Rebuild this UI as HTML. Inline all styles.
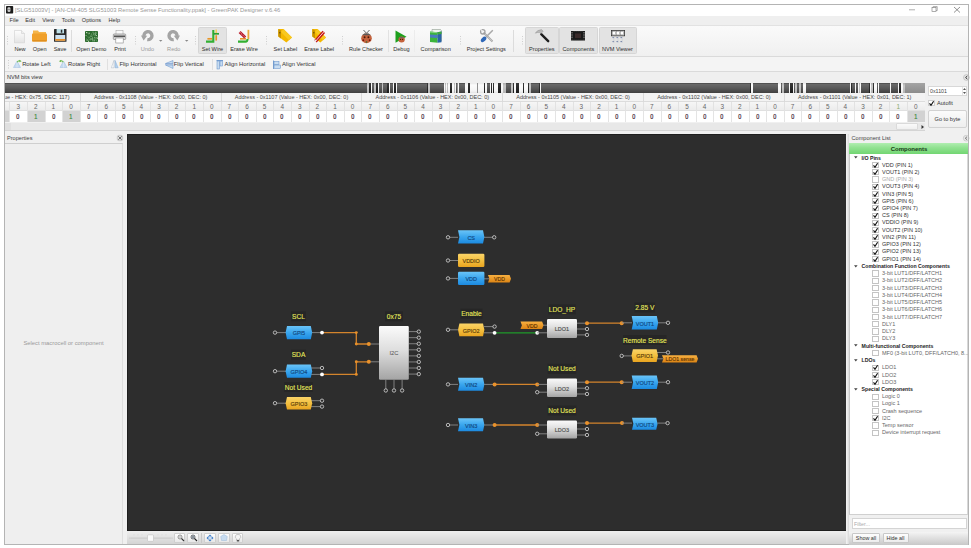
<!DOCTYPE html><html><head><meta charset="utf-8"><style>
html,body{margin:0;padding:0;background:#fff;width:971px;height:548px;overflow:hidden;font-family:"Liberation Sans", sans-serif;}
div{box-sizing:border-box;}
</style></head><body>
<div style="position:absolute;left:4px;top:4px;width:965px;height:541px;border:1px solid #b4b4b4;background:#f0f0f0;"></div>
<div style="position:absolute;left:5px;top:5px;width:963px;height:10.5px;background:#fff;"></div>
<div style="position:absolute;left:15px;top:4.8999999999999995px;height:11.6px;line-height:11.6px;font-size:5.8px;color:#999;white-space:nowrap;">[SLG51003V] - [AN-CM-405 SLG51003 Remote Sense Functionality.ppak] - GreenPAK Designer v.6.46</div>
<svg style="position:absolute;left:900px;top:5px" width="68" height="10"><line x1="9" y1="4.8" x2="15" y2="4.8" stroke="#777" stroke-width="0.6"/><rect x="32" y="2.6" width="4" height="4" fill="none" stroke="#777" stroke-width="0.6"/><path d="M33.2 2.6V1.6H37.2V5.6H36" fill="none" stroke="#777" stroke-width="0.6"/><path d="M54 2 L60 7.5 M60 2 L54 7.5" stroke="#666" stroke-width="0.7"/></svg>
<div style="position:absolute;left:5px;top:15.5px;width:963px;height:9.5px;background:#efefef;"></div>
<div style="position:absolute;left:9.5px;top:14.9px;height:11.2px;line-height:11.2px;font-size:5.6px;color:#333;white-space:nowrap;">File</div>
<div style="position:absolute;left:25.3px;top:14.9px;height:11.2px;line-height:11.2px;font-size:5.6px;color:#333;white-space:nowrap;">Edit</div>
<div style="position:absolute;left:42.2px;top:14.9px;height:11.2px;line-height:11.2px;font-size:5.6px;color:#333;white-space:nowrap;">View</div>
<div style="position:absolute;left:61.8px;top:14.9px;height:11.2px;line-height:11.2px;font-size:5.6px;color:#333;white-space:nowrap;">Tools</div>
<div style="position:absolute;left:81.8px;top:14.9px;height:11.2px;line-height:11.2px;font-size:5.6px;color:#333;white-space:nowrap;">Options</div>
<div style="position:absolute;left:108.5px;top:14.9px;height:11.2px;line-height:11.2px;font-size:5.6px;color:#333;white-space:nowrap;">Help</div>
<div style="position:absolute;left:5px;top:25px;width:963px;height:31.5px;background:linear-gradient(#fafafa,#f0f0f0);border-top:1px solid #e2e2e2;border-bottom:1px solid #dadada;"></div>
<div style="position:absolute;left:5px;top:56.5px;width:963px;height:15px;background:#f4f4f4;border-bottom:1px solid #dadada;"></div>
<div style="position:absolute;left:5px;top:71.5px;width:963px;height:11px;background:#efefef;"></div>
<div style="position:absolute;left:7px;top:72.0px;height:11.2px;line-height:11.2px;font-size:5.6px;color:#333;white-space:nowrap;">NVM bits view</div>
<svg style="position:absolute;left:5.9px;top:5.9px;overflow:visible" width="7.2" height="7.6" viewBox="0 0 7.2 7.6"><rect x="0" y="0" width="7.2" height="7.6" rx="0.8" fill="#1c1c1c"/><rect x="1.5" y="1.3" width="3" height="4.6" rx="1.2" fill="#c8c8c8"/><rect x="1.5" y="3.4" width="3" height="0.5" fill="#555"/></svg>
<svg style="position:absolute;left:7px;top:36px;overflow:visible" width="1" height="10" viewBox="0 0 1 10"><rect x="0" y="0" width="1" height="1" fill="#cfcfcf"/><rect x="0" y="2.5" width="1" height="1" fill="#cfcfcf"/><rect x="0" y="5.0" width="1" height="1" fill="#cfcfcf"/><rect x="0" y="7.5" width="1" height="1" fill="#cfcfcf"/></svg>
<div style="position:absolute;left:198.3px;top:27.3px;width:28.799999999999983px;height:26.8px;background:#e3e3e3;border:1px solid #d6d6d6;border-radius:1.5px;"></div>
<div style="position:absolute;left:525.2px;top:27.3px;width:33.69999999999993px;height:26.8px;background:#e3e3e3;border:1px solid #d6d6d6;border-radius:1.5px;"></div>
<div style="position:absolute;left:559.4px;top:27.3px;width:38.39999999999998px;height:26.8px;background:#e3e3e3;border:1px solid #d6d6d6;border-radius:1.5px;"></div>
<div style="position:absolute;left:598.6px;top:27.3px;width:38.19999999999993px;height:26.8px;background:#e3e3e3;border:1px solid #d6d6d6;border-radius:1.5px;"></div>
<div style="position:absolute;left:-10.0px;top:43.8px;width:60px;height:11.2px;line-height:11.2px;text-align:center;font-size:5.6px;color:#2e2e2e;white-space:nowrap;">New</div>
<div style="position:absolute;left:9.700000000000003px;top:43.8px;width:60px;height:11.2px;line-height:11.2px;text-align:center;font-size:5.6px;color:#2e2e2e;white-space:nowrap;">Open</div>
<div style="position:absolute;left:30.0px;top:43.8px;width:60px;height:11.2px;line-height:11.2px;text-align:center;font-size:5.6px;color:#2e2e2e;white-space:nowrap;">Save</div>
<div style="position:absolute;left:61.400000000000006px;top:43.8px;width:60px;height:11.2px;line-height:11.2px;text-align:center;font-size:5.6px;color:#2e2e2e;white-space:nowrap;">Open Demo</div>
<div style="position:absolute;left:90.0px;top:43.8px;width:60px;height:11.2px;line-height:11.2px;text-align:center;font-size:5.6px;color:#2e2e2e;white-space:nowrap;">Print</div>
<div style="position:absolute;left:117.4px;top:43.8px;width:60px;height:11.2px;line-height:11.2px;text-align:center;font-size:5.6px;color:#9a9a9a;white-space:nowrap;">Undo</div>
<div style="position:absolute;left:143.8px;top:43.8px;width:60px;height:11.2px;line-height:11.2px;text-align:center;font-size:5.6px;color:#9a9a9a;white-space:nowrap;">Redo</div>
<div style="position:absolute;left:182.4px;top:43.8px;width:60px;height:11.2px;line-height:11.2px;text-align:center;font-size:5.6px;color:#2e2e2e;white-space:nowrap;">Set Wire</div>
<div style="position:absolute;left:214.0px;top:43.8px;width:60px;height:11.2px;line-height:11.2px;text-align:center;font-size:5.6px;color:#2e2e2e;white-space:nowrap;">Erase Wire</div>
<div style="position:absolute;left:255.39999999999998px;top:43.8px;width:60px;height:11.2px;line-height:11.2px;text-align:center;font-size:5.6px;color:#2e2e2e;white-space:nowrap;">Set Label</div>
<div style="position:absolute;left:289.2px;top:43.8px;width:60px;height:11.2px;line-height:11.2px;text-align:center;font-size:5.6px;color:#2e2e2e;white-space:nowrap;">Erase Label</div>
<div style="position:absolute;left:336.0px;top:43.8px;width:60px;height:11.2px;line-height:11.2px;text-align:center;font-size:5.6px;color:#2e2e2e;white-space:nowrap;">Rule Checker</div>
<div style="position:absolute;left:371.4px;top:43.8px;width:60px;height:11.2px;line-height:11.2px;text-align:center;font-size:5.6px;color:#2e2e2e;white-space:nowrap;">Debug</div>
<div style="position:absolute;left:405.7px;top:43.8px;width:60px;height:11.2px;line-height:11.2px;text-align:center;font-size:5.6px;color:#2e2e2e;white-space:nowrap;">Comparison</div>
<div style="position:absolute;left:456.3px;top:43.8px;width:60px;height:11.2px;line-height:11.2px;text-align:center;font-size:5.6px;color:#2e2e2e;white-space:nowrap;">Project Settings</div>
<div style="position:absolute;left:511.79999999999995px;top:43.8px;width:60px;height:11.2px;line-height:11.2px;text-align:center;font-size:5.6px;color:#2e2e2e;white-space:nowrap;">Properties</div>
<div style="position:absolute;left:548.4px;top:43.8px;width:60px;height:11.2px;line-height:11.2px;text-align:center;font-size:5.6px;color:#2e2e2e;white-space:nowrap;">Components</div>
<div style="position:absolute;left:587.4px;top:43.8px;width:60px;height:11.2px;line-height:11.2px;text-align:center;font-size:5.6px;color:#2e2e2e;white-space:nowrap;">NVM Viewer</div>
<div style="position:absolute;left:71.2px;top:30px;width:1px;height:22px;background:#dcdcdc;"></div>
<svg style="position:absolute;left:134.5px;top:36px;overflow:visible" width="1" height="10" viewBox="0 0 1 10"><rect x="0" y="0" width="1" height="1" fill="#cfcfcf"/><rect x="0" y="2.5" width="1" height="1" fill="#cfcfcf"/><rect x="0" y="5.0" width="1" height="1" fill="#cfcfcf"/><rect x="0" y="7.5" width="1" height="1" fill="#cfcfcf"/></svg>
<svg style="position:absolute;left:194.5px;top:36px;overflow:visible" width="1" height="10" viewBox="0 0 1 10"><rect x="0" y="0" width="1" height="1" fill="#cfcfcf"/><rect x="0" y="2.5" width="1" height="1" fill="#cfcfcf"/><rect x="0" y="5.0" width="1" height="1" fill="#cfcfcf"/><rect x="0" y="7.5" width="1" height="1" fill="#cfcfcf"/></svg>
<svg style="position:absolute;left:266px;top:36px;overflow:visible" width="1" height="10" viewBox="0 0 1 10"><rect x="0" y="0" width="1" height="1" fill="#cfcfcf"/><rect x="0" y="2.5" width="1" height="1" fill="#cfcfcf"/><rect x="0" y="5.0" width="1" height="1" fill="#cfcfcf"/><rect x="0" y="7.5" width="1" height="1" fill="#cfcfcf"/></svg>
<svg style="position:absolute;left:341.8px;top:36px;overflow:visible" width="1" height="10" viewBox="0 0 1 10"><rect x="0" y="0" width="1" height="1" fill="#cfcfcf"/><rect x="0" y="2.5" width="1" height="1" fill="#cfcfcf"/><rect x="0" y="5.0" width="1" height="1" fill="#cfcfcf"/><rect x="0" y="7.5" width="1" height="1" fill="#cfcfcf"/></svg>
<div style="position:absolute;left:388.3px;top:30px;width:1px;height:22px;background:#e2e2e2;"></div>
<div style="position:absolute;left:413.8px;top:30px;width:1px;height:22px;background:#ececec;"></div>
<svg style="position:absolute;left:459.6px;top:36px;overflow:visible" width="1" height="10" viewBox="0 0 1 10"><rect x="0" y="0" width="1" height="1" fill="#cfcfcf"/><rect x="0" y="2.5" width="1" height="1" fill="#cfcfcf"/><rect x="0" y="5.0" width="1" height="1" fill="#cfcfcf"/><rect x="0" y="7.5" width="1" height="1" fill="#cfcfcf"/></svg>
<div style="position:absolute;left:512.6px;top:30px;width:1px;height:22px;background:#dcdcdc;"></div>
<svg style="position:absolute;left:522.4px;top:36px;overflow:visible" width="1" height="10" viewBox="0 0 1 10"><rect x="0" y="0" width="1" height="1" fill="#cfcfcf"/><rect x="0" y="2.5" width="1" height="1" fill="#cfcfcf"/><rect x="0" y="5.0" width="1" height="1" fill="#cfcfcf"/><rect x="0" y="7.5" width="1" height="1" fill="#cfcfcf"/></svg>
<svg style="position:absolute;left:14.4px;top:29.7px;overflow:visible" width="11" height="13.3" viewBox="0 0 11 13.3"><defs><linearGradient id="gNew" x1="0" y1="0" x2="0" y2="1"><stop offset="0" stop-color="#fdfdfd"/><stop offset="1" stop-color="#e4e4e4"/></linearGradient></defs><path d="M0.5 0.5H7.5L10.5 3.5V12.8H0.5Z" fill="url(#gNew)" stroke="#d0d0d0" stroke-width="0.6"/><path d="M7.5 0.5V3.5H10.5" fill="#eee" stroke="#c8c8c8" stroke-width="0.5"/></svg>
<svg style="position:absolute;left:32.4px;top:30px;overflow:visible" width="15" height="11.5" viewBox="0 0 15 11.5"><path d="M1 0.5H6L7 2H14V10.5H1Z" fill="#f5b54a"/><rect x="0" y="3.5" width="15" height="8" rx="0.8" fill="#f0a02a"/><rect x="0.5" y="10" width="14" height="1.5" fill="#e09020"/></svg>
<svg style="position:absolute;left:53.5px;top:29.3px;overflow:visible" width="12.5" height="12.8" viewBox="0 0 12.5 12.8"><rect x="0" y="0" width="12.5" height="12.8" rx="0.6" fill="#2b2b2b"/><rect x="2.6" y="0" width="7.4" height="4.3" fill="#bfe0e8"/><rect x="6.8" y="0.7" width="1.5" height="3" fill="#2b2b2b"/><rect x="1.3" y="6" width="9.9" height="5.8" fill="#cfe2f0"/><rect x="1.3" y="10" width="9.9" height="1.8" fill="#e8902a"/></svg>
<svg style="position:absolute;left:85px;top:31px;overflow:visible" width="13" height="11" viewBox="0 0 13 11"><rect x="0" y="0" width="13" height="11" rx="0.8" fill="#2a6a2c"/><rect x="3.2" y="5.7" width="1.2" height="0.9" fill="#5a8a5a"/><rect x="7.2" y="6.3" width="0.7" height="0.7" fill="#c0d8b8"/><rect x="11.9" y="5.0" width="0.9" height="1.0" fill="#4a7a4a"/><rect x="2.2" y="6.5" width="0.8" height="0.5" fill="#4a7a4a"/><rect x="9.4" y="2.0" width="0.5" height="1.1" fill="#4a7a4a"/><rect x="10.0" y="3.1" width="1.1" height="1.2" fill="#4a7a4a"/><rect x="8.7" y="9.3" width="1.1" height="1.0" fill="#c0d8b8"/><rect x="11.6" y="1.8" width="0.6" height="0.6" fill="#5a8a5a"/><rect x="3.0" y="9.7" width="1.1" height="1.2" fill="#c0d8b8"/><rect x="5.3" y="8.4" width="0.8" height="1.0" fill="#4a7a4a"/><rect x="7.2" y="9.1" width="1.2" height="1.3" fill="#7aaa7a"/><rect x="8.2" y="2.0" width="1.3" height="1.2" fill="#5a8a5a"/><rect x="7.0" y="7.3" width="1.0" height="1.3" fill="#9ac49a"/><rect x="3.6" y="1.7" width="1.2" height="1.3" fill="#c0d8b8"/><rect x="1.5" y="8.1" width="1.2" height="0.5" fill="#c0d8b8"/><rect x="5.4" y="4.4" width="0.5" height="1.0" fill="#7aaa7a"/><rect x="1.0" y="7.3" width="0.9" height="1.2" fill="#5a8a5a"/><rect x="3.7" y="2.7" width="0.7" height="0.6" fill="#7aaa7a"/><rect x="7.4" y="0.8" width="1.3" height="0.7" fill="#9ac49a"/><rect x="3.5" y="7.1" width="0.8" height="1.3" fill="#5a8a5a"/><rect x="10.8" y="4.1" width="1.2" height="0.8" fill="#c0d8b8"/><rect x="10.5" y="7.0" width="1.0" height="1.3" fill="#7aaa7a"/><rect x="6.3" y="4.6" width="1.2" height="0.8" fill="#9ac49a"/><rect x="3.5" y="3.4" width="0.5" height="0.8" fill="#5a8a5a"/><rect x="7.2" y="0.7" width="1.0" height="0.6" fill="#4a7a4a"/><rect x="7.8" y="3.7" width="1.0" height="0.8" fill="#5a8a5a"/><rect x="8.6" y="7.5" width="1.0" height="1.3" fill="#7aaa7a"/><rect x="0.7" y="4.0" width="0.7" height="1.0" fill="#c0d8b8"/><rect x="2.5" y="2.3" width="1.2" height="0.7" fill="#5a8a5a"/><rect x="9.6" y="1.5" width="1.3" height="1.0" fill="#7aaa7a"/><rect x="2.0" y="5.3" width="0.7" height="0.6" fill="#5a8a5a"/><rect x="5.5" y="7.1" width="1.0" height="1.3" fill="#7aaa7a"/><rect x="8.3" y="2.6" width="0.6" height="1.1" fill="#9ac49a"/><rect x="3.0" y="5.9" width="0.7" height="0.6" fill="#5a8a5a"/><rect x="6.6" y="2.3" width="0.6" height="0.7" fill="#4a7a4a"/><rect x="9.8" y="6.6" width="0.8" height="0.6" fill="#4a7a4a"/><rect x="3.9" y="8.0" width="0.9" height="1.0" fill="#5a8a5a"/><rect x="3.8" y="5.9" width="1.2" height="0.6" fill="#7aaa7a"/><rect x="0.6" y="9.5" width="1.3" height="0.8" fill="#4a7a4a"/><rect x="11.4" y="9.3" width="0.5" height="0.9" fill="#9ac49a"/><rect x="9.2" y="7.6" width="0.9" height="1.2" fill="#5a8a5a"/><rect x="10.4" y="8.7" width="0.6" height="0.7" fill="#5a8a5a"/><rect x="0.9" y="8.1" width="1.2" height="1.2" fill="#4a7a4a"/><rect x="10.8" y="6.0" width="0.9" height="0.6" fill="#7aaa7a"/><rect x="6.3" y="2.8" width="0.9" height="0.8" fill="#7aaa7a"/><rect x="11.3" y="6.3" width="0.6" height="1.3" fill="#5a8a5a"/><rect x="6.7" y="8.2" width="0.8" height="0.7" fill="#7aaa7a"/><rect x="6.6" y="8.3" width="0.7" height="0.7" fill="#9ac49a"/><rect x="10.7" y="1.7" width="0.9" height="1.0" fill="#7aaa7a"/><rect x="5.1" y="7.7" width="0.7" height="0.9" fill="#9ac49a"/><rect x="5.4" y="5.0" width="1.2" height="1.1" fill="#7aaa7a"/><rect x="1.0" y="1.0" width="1.3" height="1.2" fill="#c0d8b8"/><rect x="1.5" y="5.3" width="0.6" height="0.6" fill="#5a8a5a"/><rect x="4.9" y="4.2" width="0.8" height="0.7" fill="#5a8a5a"/><rect x="4.3" y="1.7" width="0.5" height="1.1" fill="#4a7a4a"/><rect x="9.6" y="5.9" width="0.8" height="1.0" fill="#7aaa7a"/><rect x="9.5" y="4.1" width="1.0" height="0.8" fill="#7aaa7a"/><rect x="4.8" y="5.2" width="0.8" height="1.1" fill="#5a8a5a"/><rect x="5.8" y="2.8" width="0.7" height="1.0" fill="#4a7a4a"/><rect x="9.7" y="2.6" width="1.2" height="1.2" fill="#9ac49a"/><rect x="4.8" y="9.0" width="0.6" height="1.1" fill="#5a8a5a"/><rect x="11.3" y="7.4" width="1.1" height="1.0" fill="#4a7a4a"/><rect x="8.9" y="5.9" width="1.1" height="1.1" fill="#7aaa7a"/><rect x="5.9" y="2.7" width="0.5" height="0.6" fill="#c0d8b8"/><rect x="1.6" y="8.9" width="1.2" height="0.8" fill="#9ac49a"/><rect x="10.3" y="0.7" width="1.0" height="1.2" fill="#7aaa7a"/><rect x="11.5" y="6.0" width="0.5" height="1.1" fill="#7aaa7a"/><rect x="6.4" y="7.3" width="0.9" height="0.6" fill="#7aaa7a"/><rect x="6.9" y="5.7" width="0.6" height="0.6" fill="#4a7a4a"/><rect x="12.0" y="6.6" width="1.0" height="1.1" fill="#c0d8b8"/></svg>
<svg style="position:absolute;left:112.8px;top:29.7px;overflow:visible" width="13" height="13.3" viewBox="0 0 13 13.3"><rect x="3" y="0.5" width="7" height="4" fill="#fafafa" stroke="#9a9a9a" stroke-width="0.5"/><rect x="0.3" y="4" width="12.4" height="5.5" rx="0.8" fill="#dcdcdc" stroke="#777" stroke-width="0.6"/><rect x="1" y="5.5" width="11" height="1.6" fill="#555"/><rect x="2.8" y="8" width="7.4" height="5" fill="#fff" stroke="#888" stroke-width="0.6"/></svg>
<svg style="position:absolute;left:141px;top:30px;overflow:visible" width="13" height="12" viewBox="0 0 13 12"><path d="M6.3 9.6A4 4 0 1 0 3.2 7" fill="none" stroke="#a4a4a4" stroke-width="3.4"/><path d="M0 5.6L6.2 5.8L2.6 10.4Z" fill="#a4a4a4"/></svg>
<svg style="position:absolute;left:166.7px;top:30px;overflow:visible" width="13" height="12" viewBox="0 0 13 12"><g transform="translate(13,0) scale(-1,1)"><path d="M6.3 9.6A4 4 0 1 0 3.2 7" fill="none" stroke="#a4a4a4" stroke-width="3.4"/><path d="M0 5.6L6.2 5.8L2.6 10.4Z" fill="#a4a4a4"/></g></svg>
<svg style="position:absolute;left:158.8px;top:40.2px;overflow:visible" width="3.4" height="2" viewBox="0 0 3.4 2"><path d="M0 0H3.4L1.7 1.8Z" fill="#888"/></svg>
<svg style="position:absolute;left:184.8px;top:40.2px;overflow:visible" width="3.4" height="2" viewBox="0 0 3.4 2"><path d="M0 0H3.4L1.7 1.8Z" fill="#888"/></svg>
<svg style="position:absolute;left:206px;top:29px;overflow:visible" width="14" height="14" viewBox="0 0 14 14"><path d="M1.4 9.8H6.2" stroke="#e8962a" stroke-width="1.7"/><path d="M10.2 6.2V11.6" stroke="#e8962a" stroke-width="1.7"/><path d="M10.2 0.5V4" stroke="#f4d060" stroke-width="1.6"/><path d="M0 12.6H7.3V1" stroke="#33b033" stroke-width="2.1" fill="none"/><path d="M7.3 4.8H13" stroke="#2fa02f" stroke-width="1.7"/></svg>
<svg style="position:absolute;left:238px;top:29px;overflow:visible" width="13" height="14" viewBox="0 0 13 14"><path d="M2 9.8H8" stroke="#e8962a" stroke-width="1.6"/><path d="M10.4 0.8V10.2" stroke="#eaa83a" stroke-width="1.8"/><path d="M0 12.6H7.5Q9.5 12.6 9.5 10" stroke="#33b033" stroke-width="2.1" fill="none"/><path d="M1.6 3L7.2 8.6" stroke="#b81828" stroke-width="2.8"/><path d="M1.6 3L7.2 8.6" stroke="#f8c8c8" stroke-width="0.9" stroke-dasharray="1 1"/></svg>
<svg style="position:absolute;left:277.7px;top:29px;overflow:visible" width="14" height="14" viewBox="0 0 14 14"><path d="M0.3 0H5.5L14 8.4L8.4 13.6L0.3 7.4Z" fill="#f4b800"/><path d="M5.5 0L14 8.4L11 11.2L3 3Z" fill="#f8c820"/><path d="M0.3 0L3 1.6V9.4L0.3 7.4Z" fill="#c89200"/><circle cx="1.8" cy="3.8" r="0.8" fill="#705000"/></svg>
<svg style="position:absolute;left:311.8px;top:29px;overflow:visible" width="14" height="14" viewBox="0 0 14 14"><path d="M0.3 0H5.5L14 8.4L8.4 13.6L0.3 7.4Z" fill="#f4b800"/><path d="M5.5 0L14 8.4L11 11.2L3 3Z" fill="#f8c820"/><path d="M0.3 0L3 1.6V9.4L0.3 7.4Z" fill="#c89200"/><circle cx="1.8" cy="3.8" r="0.8" fill="#705000"/><path d="M3.4 12.4L11.8 2.8" stroke="#c41818" stroke-width="3.4"/><path d="M3.4 12.4L11.8 2.8" stroke="#ffe0e0" stroke-width="0.9"/><path d="M2.6 12.6L4 11" stroke="#e8e8f0" stroke-width="1.6"/></svg>
<svg style="position:absolute;left:360px;top:29.5px;overflow:visible" width="13" height="13.5" viewBox="0 0 13 13.5"><path d="M3.5 0L6.2 3M9.5 0L6.8 3" stroke="#444" stroke-width="0.8"/><ellipse cx="6.5" cy="8.2" rx="5.3" ry="5" fill="#c4623c"/><path d="M2 5.3Q6.5 1 11 5.3Z" fill="#5a5a5a"/><path d="M4 3.6Q6.5 2.2 9 3.6" stroke="#9a9a9a" stroke-width="0.6" fill="none"/><circle cx="4.6" cy="7.2" r="0.95" fill="#4a1808"/><circle cx="8.4" cy="7.2" r="0.95" fill="#4a1808"/><circle cx="3.3" cy="10.2" r="0.9" fill="#7a1208"/><circle cx="9.7" cy="10.2" r="0.9" fill="#7a1208"/><circle cx="6.5" cy="12" r="0.8" fill="#3a6a3a"/></svg>
<svg style="position:absolute;left:395px;top:29.8px;overflow:visible" width="12" height="13" viewBox="0 0 12 13"><path d="M0.5 0.5L11.5 6.8L0.5 12.8Z" fill="#1ea01e"/><ellipse cx="6.6" cy="9.6" rx="3.2" ry="3" fill="#c4623c"/><path d="M3.6 8.2Q6.6 5.6 9.6 8.2Z" fill="#666"/><circle cx="5.6" cy="9.4" r="0.6" fill="#4a1808"/><circle cx="7.6" cy="9.4" r="0.6" fill="#4a1808"/></svg>
<svg style="position:absolute;left:430px;top:29px;overflow:visible" width="12" height="14.2" viewBox="0 0 12 14.2"><path d="M2 0.5H10.5L11.5 1.8V12H2Z" fill="#eef4ee" stroke="#7a8a7a" stroke-width="0.5"/><path d="M0 2.5L7.5 3.2V13.8L0 13Z" fill="#3cb43c"/><path d="M0 5.5L7.5 6V9L0 8.5Z" fill="#4a7ac0"/><path d="M0 2.5L7.5 3.2V4.2L0 3.6Z" fill="#8ad48a"/><path d="M7.5 3.2L11.5 2.6V13.2L7.5 13.8Z" fill="#2a64a4"/><path d="M7.5 3.2L11.5 2.6V5L7.5 5.6Z" fill="#3ca83c"/></svg>
<svg style="position:absolute;left:479.5px;top:29.3px;overflow:visible" width="14" height="14" viewBox="0 0 14 14"><path d="M3.5 3.5L12.5 12.5" stroke="#a8a8a8" stroke-width="2"/><path d="M3.5 3.5L12.5 12.5" stroke="#d8d8d8" stroke-width="0.6"/><circle cx="2.8" cy="2.8" r="2.2" fill="none" stroke="#a0a0a0" stroke-width="1.3"/><path d="M1 0.5L3 3" stroke="#f2f2f2" stroke-width="1.2"/><path d="M12.8 1.2L6 8" stroke="#a8a8a8" stroke-width="1.5"/><ellipse cx="3.6" cy="10.4" rx="2" ry="3.3" transform="rotate(45 3.6 10.4)" fill="#3068b8"/></svg>
<svg style="position:absolute;left:534.5px;top:28.8px;overflow:visible" width="15" height="14" viewBox="0 0 15 14"><path d="M6.2 5.2L13.2 12.2" stroke="#1e1e1e" stroke-width="2.4" stroke-linecap="round"/><path d="M0.3 4.2Q2 1 6.5 0.6L8.2 2.2L5.8 4.8L4.6 3.6Q2.5 3.2 0.3 4.2Z" fill="#b8b8b8" stroke="#888" stroke-width="0.4"/></svg>
<svg style="position:absolute;left:571px;top:31px;overflow:visible" width="14" height="9.5" viewBox="0 0 14 9.5"><rect x="0" y="0" width="14" height="9.5" fill="#1a1a1a"/><rect x="4" y="2.5" width="6" height="4.5" fill="#3a2a2a"/><path d="M1 1.3V8.2M13 1.3V8.2" stroke="#e8e8e8" stroke-width="0.9" stroke-dasharray="1 1.2"/><path d="M2.6 0.5H11.4M2.6 9H11.4" stroke="#555" stroke-width="0.6" stroke-dasharray="1 1"/></svg>
<svg style="position:absolute;left:610.5px;top:29.6px;overflow:visible" width="14" height="13" viewBox="0 0 14 13"><rect x="0.4" y="0.4" width="13.2" height="5.4" fill="#f4f4f4" stroke="#333" stroke-width="0.8"/><rect x="1.3" y="1.3" width="3" height="3.6" fill="#fff" stroke="#666" stroke-width="0.4"/><rect x="5.5" y="1.3" width="3" height="3.6" fill="#fff" stroke="#666" stroke-width="0.4"/><rect x="9.7" y="1.3" width="3" height="3.6" fill="#fff" stroke="#666" stroke-width="0.4"/><path d="M1.5 7.6H13M1.5 11.6H13" stroke="#6a7aa0" stroke-width="1" stroke-dasharray="1.6 2.4"/><path d="M2.8 6V13M7 6V13M11.2 6V13" stroke="#b8c0d0" stroke-width="0.4"/></svg>
<svg style="position:absolute;left:7.5px;top:59.5px;overflow:visible" width="1" height="9.5" viewBox="0 0 1 9.5"><rect x="0" y="0.0" width="1" height="1" fill="#cfcfcf"/><rect x="0" y="2.5" width="1" height="1" fill="#cfcfcf"/><rect x="0" y="5.0" width="1" height="1" fill="#cfcfcf"/><rect x="0" y="7.5" width="1" height="1" fill="#cfcfcf"/></svg>
<svg style="position:absolute;left:12.8px;top:60.3px;overflow:visible" width="9" height="8" viewBox="0 0 9 8"><path d="M0.5 7.5L4 1L7.5 7.5Z" fill="#c4daf0" stroke="#8ab0d8" stroke-width="0.4"/><path d="M4 1V7.5" stroke="#e8f2fc" stroke-width="0.5"/><path d="M4.2 2.2Q5 0.3 7.2 0.8" stroke="#6ab84a" stroke-width="1.1" fill="none"/><path d="M6.4 -0.3L8.6 1.2L6.3 2.2Z" fill="#6ab84a"/></svg>
<div style="position:absolute;left:22.2px;top:59.2px;height:11.6px;line-height:11.6px;font-size:5.8px;color:#333;white-space:nowrap;">Rotate Left</div>
<svg style="position:absolute;left:58.5px;top:60.3px;overflow:visible" width="9" height="8" viewBox="0 0 9 8"><g transform="translate(8.5,0) scale(-1,1)"><path d="M0.5 7.5L4 1L7.5 7.5Z" fill="#c4daf0" stroke="#8ab0d8" stroke-width="0.4"/><path d="M4 1V7.5" stroke="#e8f2fc" stroke-width="0.5"/><path d="M4.2 2.2Q5 0.3 7.2 0.8" stroke="#6ab84a" stroke-width="1.1" fill="none"/><path d="M6.4 -0.3L8.6 1.2L6.3 2.2Z" fill="#6ab84a"/></g></svg>
<div style="position:absolute;left:68px;top:59.2px;height:11.6px;line-height:11.6px;font-size:5.8px;color:#333;white-space:nowrap;">Rotate Right</div>
<div style="position:absolute;left:107.2px;top:59px;width:1px;height:10.5px;background:#e0e0e0;"></div>
<svg style="position:absolute;left:111.2px;top:60px;overflow:visible" width="7.5" height="8" viewBox="0 0 7.5 8"><path d="M3 0.3L0.3 7.8H3Z" fill="#fafafa" stroke="#9aaabb" stroke-width="0.4"/><path d="M4 0.3L7.2 7.8H4Z" fill="#b4d0ec" stroke="#7aa4d0" stroke-width="0.4"/></svg>
<div style="position:absolute;left:119.5px;top:59.2px;height:11.6px;line-height:11.6px;font-size:5.8px;color:#333;white-space:nowrap;">Flip Horizontal</div>
<svg style="position:absolute;left:164.5px;top:60px;overflow:visible" width="8.5" height="9" viewBox="0 0 8.5 9"><path d="M0.5 3.5L8 0.5V3.5ZM0.5 5L8 8.5V5Z" fill="#c8dcf0" stroke="#5a8ac8" stroke-width="0.5"/><path d="M0 4.2H8.5" stroke="#5a8ac8" stroke-width="0.5"/></svg>
<div style="position:absolute;left:173.8px;top:59.2px;height:11.6px;line-height:11.6px;font-size:5.8px;color:#333;white-space:nowrap;">Flip Vertical</div>
<div style="position:absolute;left:211.8px;top:59px;width:1px;height:10.5px;background:#e0e0e0;"></div>
<svg style="position:absolute;left:216px;top:59.5px;overflow:visible" width="7.5" height="9.5" viewBox="0 0 7.5 9.5"><path d="M0.5 0.5H7" stroke="#5a8ac8" stroke-width="0.8"/><rect x="1" y="1" width="2.5" height="8" fill="#c8dcf0" stroke="#5a8ac8" stroke-width="0.5"/><rect x="4" y="1" width="2.5" height="5" fill="#c8dcf0" stroke="#5a8ac8" stroke-width="0.5"/></svg>
<div style="position:absolute;left:224.6px;top:59.2px;height:11.6px;line-height:11.6px;font-size:5.8px;color:#333;white-space:nowrap;">Align Horizontal</div>
<svg style="position:absolute;left:273.4px;top:59.5px;overflow:visible" width="7.5" height="9.5" viewBox="0 0 7.5 9.5"><path d="M0.5 0.5V9" stroke="#5a8ac8" stroke-width="0.8"/><rect x="1" y="1.5" width="5" height="3" fill="#c8dcf0" stroke="#5a8ac8" stroke-width="0.5"/><rect x="1" y="5" width="6.5" height="3.5" fill="#c8dcf0" stroke="#5a8ac8" stroke-width="0.5"/></svg>
<div style="position:absolute;left:282px;top:59.2px;height:11.6px;line-height:11.6px;font-size:5.8px;color:#333;white-space:nowrap;">Align Vertical</div>
<svg style="position:absolute;left:962.5px;top:74.2px;overflow:visible" width="7" height="7" viewBox="0 0 7 7"><circle cx="3.4" cy="3.5" r="2.9" fill="#e4e4e4" stroke="#a8a8a8" stroke-width="0.5"/><path d="M4.3 2L2.6 3.5L4.3 5" stroke="#222" stroke-width="0.9" fill="none"/></svg>
<div style="position:absolute;left:5px;top:82.8px;width:920px;height:10px;background:linear-gradient(#3a3a3a 0px,#6a6a6a 1px,#5a5a5a 5px,#404040 10px);overflow:hidden">
<div style="position:absolute;left:361.9px;top:0;width:1.9px;height:10px;background:linear-gradient(#b0b0b0,#c8c8c8 3px,#b4b4b4)"></div>
<div style="position:absolute;left:363.8px;top:0;width:2.0px;height:10px;background:linear-gradient(#3a3a3a,#1a1a1a)"></div>
<div style="position:absolute;left:365.8px;top:0;width:1.3px;height:10px;background:linear-gradient(#e8e8e8,#fcfcfc 2px,#f4f4f4 8px,#e4e4e4)"></div>
<div style="position:absolute;left:369.3px;top:0;width:1.5px;height:10px;background:linear-gradient(#b0b0b0,#c8c8c8 3px,#b4b4b4)"></div>
<div style="position:absolute;left:370.8px;top:0;width:2.0px;height:10px;background:linear-gradient(#3a3a3a,#1a1a1a)"></div>
<div style="position:absolute;left:372.8px;top:0;width:1.3px;height:10px;background:linear-gradient(#e8e8e8,#fcfcfc 2px,#f4f4f4 8px,#e4e4e4)"></div>
<div style="position:absolute;left:377.2px;top:0;width:0.8px;height:10px;background:linear-gradient(#b0b0b0,#c8c8c8 3px,#b4b4b4)"></div>
<div style="position:absolute;left:381.7px;top:0;width:2.0px;height:10px;background:linear-gradient(#3a3a3a,#1a1a1a)"></div>
<div style="position:absolute;left:383.7px;top:0;width:1.3px;height:10px;background:linear-gradient(#e8e8e8,#fcfcfc 2px,#f4f4f4 8px,#e4e4e4)"></div>
<div style="position:absolute;left:388.3px;top:0;width:0.8px;height:10px;background:linear-gradient(#e8e8e8,#fcfcfc 2px,#f4f4f4 8px,#e4e4e4)"></div>
<div style="position:absolute;left:389.1px;top:0;width:1.9px;height:10px;background:linear-gradient(#3a3a3a,#1a1a1a)"></div>
<div style="position:absolute;left:391.0px;top:0;width:1.0px;height:10px;background:linear-gradient(#e8e8e8,#fcfcfc 2px,#f4f4f4 8px,#e4e4e4)"></div>
<div style="position:absolute;left:421.7px;top:0;width:1.1px;height:10px;background:linear-gradient(#3a3a3a,#1a1a1a)"></div>
<div style="position:absolute;left:422.8px;top:0;width:2.0px;height:10px;background:linear-gradient(#b0b0b0,#c8c8c8 3px,#b4b4b4)"></div>
<div style="position:absolute;left:438.9px;top:0;width:1.2px;height:10px;background:linear-gradient(#e8e8e8,#fcfcfc 2px,#f4f4f4 8px,#e4e4e4)"></div>
<div style="position:absolute;left:440.1px;top:0;width:0.7px;height:10px;background:linear-gradient(#b0b0b0,#c8c8c8 3px,#b4b4b4)"></div>
<div style="position:absolute;left:440.8px;top:0;width:1.2px;height:10px;background:linear-gradient(#e8e8e8,#fcfcfc 2px,#f4f4f4 8px,#e4e4e4)"></div>
<div style="position:absolute;left:442.0px;top:0;width:1.2px;height:10px;background:linear-gradient(#b0b0b0,#c8c8c8 3px,#b4b4b4)"></div>
<div style="position:absolute;left:443.2px;top:0;width:1.7px;height:10px;background:linear-gradient(#e8e8e8,#fcfcfc 2px,#f4f4f4 8px,#e4e4e4)"></div>
<div style="position:absolute;left:444.9px;top:0;width:2.0px;height:10px;background:linear-gradient(#3a3a3a,#1a1a1a)"></div>
<div style="position:absolute;left:446.9px;top:0;width:2.5px;height:10px;background:linear-gradient(#e8e8e8,#fcfcfc 2px,#f4f4f4 8px,#e4e4e4)"></div>
<div style="position:absolute;left:449.4px;top:0;width:0.8px;height:10px;background:linear-gradient(#b0b0b0,#c8c8c8 3px,#b4b4b4)"></div>
<div style="position:absolute;left:450.2px;top:0;width:1.3px;height:10px;background:linear-gradient(#e8e8e8,#fcfcfc 2px,#f4f4f4 8px,#e4e4e4)"></div>
<div style="position:absolute;left:451.5px;top:0;width:1.6px;height:10px;background:#909090"></div>
<div style="position:absolute;left:453.1px;top:0;width:1.0px;height:10px;background:linear-gradient(#e8e8e8,#fcfcfc 2px,#f4f4f4 8px,#e4e4e4)"></div>
<div style="position:absolute;left:460.1px;top:0;width:2.5px;height:10px;background:linear-gradient(#e8e8e8,#fcfcfc 2px,#f4f4f4 8px,#e4e4e4)"></div>
<div style="position:absolute;left:462.6px;top:0;width:2.4px;height:10px;background:linear-gradient(#3a3a3a,#1a1a1a)"></div>
<div style="position:absolute;left:465.0px;top:0;width:2.5px;height:10px;background:linear-gradient(#e8e8e8,#fcfcfc 2px,#f4f4f4 8px,#e4e4e4)"></div>
<div style="position:absolute;left:467.5px;top:0;width:0.4px;height:10px;background:#909090"></div>
<div style="position:absolute;left:467.9px;top:0;width:4.1px;height:10px;background:linear-gradient(#e8e8e8,#fcfcfc 2px,#f4f4f4 8px,#e4e4e4)"></div>
<div style="position:absolute;left:472.0px;top:0;width:1.1px;height:10px;background:#909090"></div>
<div style="position:absolute;left:473.1px;top:0;width:2.9px;height:10px;background:linear-gradient(#e8e8e8,#fcfcfc 2px,#f4f4f4 8px,#e4e4e4)"></div>
<div style="position:absolute;left:476.0px;top:0;width:2.9px;height:10px;background:linear-gradient(#e8e8e8,#fcfcfc 2px,#f4f4f4 8px,#e4e4e4)"></div>
<div style="position:absolute;left:478.9px;top:0;width:1.0px;height:10px;background:linear-gradient(#3a3a3a,#1a1a1a)"></div>
<div style="position:absolute;left:479.9px;top:0;width:2.1px;height:10px;background:linear-gradient(#e8e8e8,#fcfcfc 2px,#f4f4f4 8px,#e4e4e4)"></div>
<div style="position:absolute;left:485.1px;top:0;width:0.8px;height:10px;background:linear-gradient(#e8e8e8,#fcfcfc 2px,#f4f4f4 8px,#e4e4e4)"></div>
<div style="position:absolute;left:485.9px;top:0;width:1.0px;height:10px;background:linear-gradient(#3a3a3a,#1a1a1a)"></div>
<div style="position:absolute;left:486.9px;top:0;width:1.1px;height:10px;background:linear-gradient(#e8e8e8,#fcfcfc 2px,#f4f4f4 8px,#e4e4e4)"></div>
<div style="position:absolute;left:488.0px;top:0;width:1.0px;height:10px;background:linear-gradient(#3a3a3a,#1a1a1a)"></div>
<div style="position:absolute;left:489.0px;top:0;width:3.9px;height:10px;background:linear-gradient(#e8e8e8,#fcfcfc 2px,#f4f4f4 8px,#e4e4e4)"></div>
<div style="position:absolute;left:492.9px;top:0;width:3.1px;height:10px;background:linear-gradient(#3a3a3a,#1a1a1a)"></div>
<div style="position:absolute;left:496.0px;top:0;width:2.0px;height:10px;background:linear-gradient(#e8e8e8,#fcfcfc 2px,#f4f4f4 8px,#e4e4e4)"></div>
<div style="position:absolute;left:498.0px;top:0;width:2.9px;height:10px;background:linear-gradient(#b0b0b0,#c8c8c8 3px,#b4b4b4)"></div>
<div style="position:absolute;left:505.9px;top:0;width:2.0px;height:10px;background:linear-gradient(#b0b0b0,#c8c8c8 3px,#b4b4b4)"></div>
<div style="position:absolute;left:507.9px;top:0;width:0.8px;height:10px;background:linear-gradient(#3a3a3a,#1a1a1a)"></div>
<div style="position:absolute;left:508.7px;top:0;width:2.3px;height:10px;background:linear-gradient(#e8e8e8,#fcfcfc 2px,#f4f4f4 8px,#e4e4e4)"></div>
<div style="position:absolute;left:511.0px;top:0;width:3.1px;height:10px;background:linear-gradient(#3a3a3a,#1a1a1a)"></div>
<div style="position:absolute;left:514.1px;top:0;width:3.5px;height:10px;background:linear-gradient(#e8e8e8,#fcfcfc 2px,#f4f4f4 8px,#e4e4e4)"></div>
<div style="position:absolute;left:517.6px;top:0;width:1.4px;height:10px;background:linear-gradient(#3a3a3a,#1a1a1a)"></div>
<div style="position:absolute;left:519.0px;top:0;width:3.8px;height:10px;background:linear-gradient(#e8e8e8,#fcfcfc 2px,#f4f4f4 8px,#e4e4e4)"></div>
<div style="position:absolute;left:522.8px;top:0;width:1.4px;height:10px;background:linear-gradient(#3a3a3a,#1a1a1a)"></div>
<div style="position:absolute;left:524.2px;top:0;width:1.8px;height:10px;background:linear-gradient(#b0b0b0,#c8c8c8 3px,#b4b4b4)"></div>
<div style="position:absolute;left:533.9px;top:0;width:1.0px;height:10px;background:linear-gradient(#3a3a3a,#1a1a1a)"></div>
<div style="position:absolute;left:534.9px;top:0;width:1.2px;height:10px;background:linear-gradient(#e8e8e8,#fcfcfc 2px,#f4f4f4 8px,#e4e4e4)"></div>
<div style="position:absolute;left:744.8px;top:0;width:1.1px;height:10px;background:linear-gradient(#3a3a3a,#1a1a1a)"></div>
<div style="position:absolute;left:745.9px;top:0;width:2.3px;height:10px;background:linear-gradient(#e8e8e8,#fcfcfc 2px,#f4f4f4 8px,#e4e4e4)"></div>
<div style="position:absolute;left:772.8px;top:0;width:3.0px;height:10px;background:linear-gradient(#e8e8e8,#fcfcfc 2px,#f4f4f4 8px,#e4e4e4)"></div>
<div style="position:absolute;left:776.9px;top:0;width:2.0px;height:10px;background:linear-gradient(#b0b0b0,#c8c8c8 3px,#b4b4b4)"></div>
<div style="position:absolute;left:783.9px;top:0;width:1.2px;height:10px;background:linear-gradient(#e8e8e8,#fcfcfc 2px,#f4f4f4 8px,#e4e4e4)"></div>
<div style="position:absolute;left:785.1px;top:0;width:2.5px;height:10px;background:linear-gradient(#3a3a3a,#1a1a1a)"></div>
<div style="position:absolute;left:787.6px;top:0;width:1.4px;height:10px;background:linear-gradient(#e8e8e8,#fcfcfc 2px,#f4f4f4 8px,#e4e4e4)"></div>
<div style="position:absolute;left:790.0px;top:0;width:2.1px;height:10px;background:linear-gradient(#b0b0b0,#c8c8c8 3px,#b4b4b4)"></div>
<div style="position:absolute;left:794.0px;top:0;width:1.8px;height:10px;background:linear-gradient(#b0b0b0,#c8c8c8 3px,#b4b4b4)"></div>
<div style="position:absolute;left:798.3px;top:0;width:2.7px;height:10px;background:linear-gradient(#e8e8e8,#fcfcfc 2px,#f4f4f4 8px,#e4e4e4)"></div>
<div style="position:absolute;left:844.7px;top:0;width:1.3px;height:10px;background:linear-gradient(#e8e8e8,#fcfcfc 2px,#f4f4f4 8px,#e4e4e4)"></div>
<div style="position:absolute;left:846.0px;top:0;width:1.2px;height:10px;background:linear-gradient(#3a3a3a,#1a1a1a)"></div>
<div style="position:absolute;left:849.7px;top:0;width:1.4px;height:10px;background:linear-gradient(#e8e8e8,#fcfcfc 2px,#f4f4f4 8px,#e4e4e4)"></div>
<div style="position:absolute;left:852.8px;top:0;width:1.4px;height:10px;background:linear-gradient(#e8e8e8,#fcfcfc 2px,#f4f4f4 8px,#e4e4e4)"></div>
<div style="position:absolute;left:854.2px;top:0;width:0.6px;height:10px;background:linear-gradient(#b0b0b0,#c8c8c8 3px,#b4b4b4)"></div>
<div style="position:absolute;left:854.8px;top:0;width:1.5px;height:10px;background:linear-gradient(#e8e8e8,#fcfcfc 2px,#f4f4f4 8px,#e4e4e4)"></div>
<div style="position:absolute;left:864.1px;top:0;width:0.8px;height:10px;background:linear-gradient(#3a3a3a,#1a1a1a)"></div>
<div style="position:absolute;left:864.9px;top:0;width:1.4px;height:10px;background:linear-gradient(#e8e8e8,#fcfcfc 2px,#f4f4f4 8px,#e4e4e4)"></div>
<div style="position:absolute;left:866.3px;top:0;width:1.7px;height:10px;background:linear-gradient(#b0b0b0,#c8c8c8 3px,#b4b4b4)"></div>
<div style="position:absolute;left:868.0px;top:0;width:1.0px;height:10px;background:linear-gradient(#3a3a3a,#1a1a1a)"></div>
<div style="position:absolute;left:869.0px;top:0;width:1.5px;height:10px;background:linear-gradient(#e8e8e8,#fcfcfc 2px,#f4f4f4 8px,#e4e4e4)"></div>
<div style="position:absolute;left:870.5px;top:0;width:0.8px;height:10px;background:linear-gradient(#b0b0b0,#c8c8c8 3px,#b4b4b4)"></div>
<div style="position:absolute;left:871.3px;top:0;width:1.2px;height:10px;background:linear-gradient(#e8e8e8,#fcfcfc 2px,#f4f4f4 8px,#e4e4e4)"></div>
<div style="position:absolute;left:872.5px;top:0;width:0.6px;height:10px;background:linear-gradient(#b0b0b0,#c8c8c8 3px,#b4b4b4)"></div>
<div style="position:absolute;left:873.1px;top:0;width:0.8px;height:10px;background:linear-gradient(#e8e8e8,#fcfcfc 2px,#f4f4f4 8px,#e4e4e4)"></div>
<div style="position:absolute;left:884.7px;top:0;width:1.4px;height:10px;background:linear-gradient(#e8e8e8,#fcfcfc 2px,#f4f4f4 8px,#e4e4e4)"></div>
<div style="position:absolute;left:892.7px;top:0;width:1.4px;height:10px;background:linear-gradient(#e8e8e8,#fcfcfc 2px,#f4f4f4 8px,#e4e4e4)"></div>
<div style="position:absolute;left:894.1px;top:0;width:1.7px;height:10px;background:linear-gradient(#3a3a3a,#1a1a1a)"></div>
<div style="position:absolute;left:895.8px;top:0;width:2.5px;height:10px;background:linear-gradient(#e8e8e8,#fcfcfc 2px,#f4f4f4 8px,#e4e4e4)"></div>
<div style="position:absolute;left:898.3px;top:0;width:1.8px;height:10px;background:linear-gradient(#b0b0b0,#c8c8c8 3px,#b4b4b4)"></div>
<div style="position:absolute;left:900.1px;top:0;width:20px;height:10px;background:linear-gradient(#a4a4a4,#8c8c8c)"></div>
</div>
<div style="position:absolute;left:5px;top:92.8px;width:920px;height:29.5px;overflow:hidden;">
<div style="position:absolute;left:0;top:0;width:920px;height:8.8px;background:#f3f3f3;border-bottom:1px solid #dcdcdc"></div>
<div style="position:absolute;left:0;top:8.8px;width:920px;height:9.5px;background:linear-gradient(#f6f6f6,#ececec);border-bottom:1px solid #e0e0e0"></div>
<div style="position:absolute;left:0;top:18.3px;width:920px;height:11.2px;background:#fff;"></div>
<div style="position:absolute;left:-65.5px;top:0;width:140.8px;height:8.8px;line-height:9.2px;text-align:center;font-size:5.5px;color:#444;white-space:nowrap;">Address - 0x1109 (Value - HEX: 0x75, DEC: 117)</div>
<div style="position:absolute;left:-66.0px;top:0;width:1px;height:8.8px;background:#dadada"></div>
<div style="position:absolute;left:-13.2px;top:18.3px;width:17.6px;height:11.2px;background:#d2d2d2;border-left:1px solid #e4e4e4;"></div>
<div style="position:absolute;left:-13.2px;top:8.8px;width:17.6px;height:9.5px;border-left:1px solid #e2e2e2;"></div>
<div style="position:absolute;left:-13.2px;top:8.8px;width:17.6px;height:9.5px;line-height:9.9px;text-align:center;font-size:6.4px;color:#666">4</div>
<div style="position:absolute;left:-13.2px;top:18.3px;width:17.6px;height:11.2px;line-height:11.399999999999999px;text-align:center;font-size:6.4px;color:#3a8a3a;"><span style="display:inline-block;transform:scaleX(0.86);-webkit-text-stroke:0.2px #3a8a3a">1</span></div>
<div style="position:absolute;left:4.4px;top:18.3px;width:17.6px;height:11.2px;background:#fff;border-left:1px solid #e4e4e4;"></div>
<div style="position:absolute;left:4.4px;top:8.8px;width:17.6px;height:9.5px;border-left:1px solid #e2e2e2;"></div>
<div style="position:absolute;left:4.4px;top:8.8px;width:17.6px;height:9.5px;line-height:9.9px;text-align:center;font-size:6.4px;color:#666">3</div>
<div style="position:absolute;left:4.4px;top:18.3px;width:17.6px;height:11.2px;line-height:11.399999999999999px;text-align:center;font-size:6.4px;color:#3a1a2e;"><span style="display:inline-block;transform:scaleX(0.86);-webkit-text-stroke:0.2px #3a1a2e">0</span></div>
<div style="position:absolute;left:22.0px;top:18.3px;width:17.6px;height:11.2px;background:#d2d2d2;border-left:1px solid #e4e4e4;"></div>
<div style="position:absolute;left:22.0px;top:8.8px;width:17.6px;height:9.5px;border-left:1px solid #e2e2e2;"></div>
<div style="position:absolute;left:22.0px;top:8.8px;width:17.6px;height:9.5px;line-height:9.9px;text-align:center;font-size:6.4px;color:#666">2</div>
<div style="position:absolute;left:22.0px;top:18.3px;width:17.6px;height:11.2px;line-height:11.399999999999999px;text-align:center;font-size:6.4px;color:#3a8a3a;"><span style="display:inline-block;transform:scaleX(0.86);-webkit-text-stroke:0.2px #3a8a3a">1</span></div>
<div style="position:absolute;left:39.6px;top:18.3px;width:17.6px;height:11.2px;background:#fff;border-left:1px solid #e4e4e4;"></div>
<div style="position:absolute;left:39.6px;top:8.8px;width:17.6px;height:9.5px;border-left:1px solid #e2e2e2;"></div>
<div style="position:absolute;left:39.6px;top:8.8px;width:17.6px;height:9.5px;line-height:9.9px;text-align:center;font-size:6.4px;color:#666">1</div>
<div style="position:absolute;left:39.6px;top:18.3px;width:17.6px;height:11.2px;line-height:11.399999999999999px;text-align:center;font-size:6.4px;color:#3a1a2e;"><span style="display:inline-block;transform:scaleX(0.86);-webkit-text-stroke:0.2px #3a1a2e">0</span></div>
<div style="position:absolute;left:57.2px;top:18.3px;width:17.6px;height:11.2px;background:#d2d2d2;border-left:1px solid #e4e4e4;"></div>
<div style="position:absolute;left:57.2px;top:8.8px;width:17.6px;height:9.5px;border-left:1px solid #e2e2e2;"></div>
<div style="position:absolute;left:57.2px;top:8.8px;width:17.6px;height:9.5px;line-height:9.9px;text-align:center;font-size:6.4px;color:#666">0</div>
<div style="position:absolute;left:57.2px;top:18.3px;width:17.6px;height:11.2px;line-height:11.399999999999999px;text-align:center;font-size:6.4px;color:#3a8a3a;"><span style="display:inline-block;transform:scaleX(0.86);-webkit-text-stroke:0.2px #3a8a3a">1</span></div>
<div style="position:absolute;left:75.3px;top:0;width:140.8px;height:8.8px;line-height:9.2px;text-align:center;font-size:5.5px;color:#444;white-space:nowrap;">Address - 0x1108 (Value - HEX: 0x00, DEC: 0)</div>
<div style="position:absolute;left:74.8px;top:0;width:1px;height:8.8px;background:#dadada"></div>
<div style="position:absolute;left:74.8px;top:18.3px;width:17.6px;height:11.2px;background:#fff;border-left:1px solid #e4e4e4;"></div>
<div style="position:absolute;left:74.8px;top:8.8px;width:17.6px;height:9.5px;border-left:1px solid #e2e2e2;"></div>
<div style="position:absolute;left:74.8px;top:8.8px;width:17.6px;height:9.5px;line-height:9.9px;text-align:center;font-size:6.4px;color:#666">7</div>
<div style="position:absolute;left:74.8px;top:18.3px;width:17.6px;height:11.2px;line-height:11.399999999999999px;text-align:center;font-size:6.4px;color:#3a1a2e;"><span style="display:inline-block;transform:scaleX(0.86);-webkit-text-stroke:0.2px #3a1a2e">0</span></div>
<div style="position:absolute;left:92.4px;top:18.3px;width:17.6px;height:11.2px;background:#fff;border-left:1px solid #e4e4e4;"></div>
<div style="position:absolute;left:92.4px;top:8.8px;width:17.6px;height:9.5px;border-left:1px solid #e2e2e2;"></div>
<div style="position:absolute;left:92.4px;top:8.8px;width:17.6px;height:9.5px;line-height:9.9px;text-align:center;font-size:6.4px;color:#666">6</div>
<div style="position:absolute;left:92.4px;top:18.3px;width:17.6px;height:11.2px;line-height:11.399999999999999px;text-align:center;font-size:6.4px;color:#3a1a2e;"><span style="display:inline-block;transform:scaleX(0.86);-webkit-text-stroke:0.2px #3a1a2e">0</span></div>
<div style="position:absolute;left:110.0px;top:18.3px;width:17.6px;height:11.2px;background:#fff;border-left:1px solid #e4e4e4;"></div>
<div style="position:absolute;left:110.0px;top:8.8px;width:17.6px;height:9.5px;border-left:1px solid #e2e2e2;"></div>
<div style="position:absolute;left:110.0px;top:8.8px;width:17.6px;height:9.5px;line-height:9.9px;text-align:center;font-size:6.4px;color:#666">5</div>
<div style="position:absolute;left:110.0px;top:18.3px;width:17.6px;height:11.2px;line-height:11.399999999999999px;text-align:center;font-size:6.4px;color:#3a1a2e;"><span style="display:inline-block;transform:scaleX(0.86);-webkit-text-stroke:0.2px #3a1a2e">0</span></div>
<div style="position:absolute;left:127.6px;top:18.3px;width:17.6px;height:11.2px;background:#fff;border-left:1px solid #e4e4e4;"></div>
<div style="position:absolute;left:127.6px;top:8.8px;width:17.6px;height:9.5px;border-left:1px solid #e2e2e2;"></div>
<div style="position:absolute;left:127.6px;top:8.8px;width:17.6px;height:9.5px;line-height:9.9px;text-align:center;font-size:6.4px;color:#666">4</div>
<div style="position:absolute;left:127.6px;top:18.3px;width:17.6px;height:11.2px;line-height:11.399999999999999px;text-align:center;font-size:6.4px;color:#3a1a2e;"><span style="display:inline-block;transform:scaleX(0.86);-webkit-text-stroke:0.2px #3a1a2e">0</span></div>
<div style="position:absolute;left:145.2px;top:18.3px;width:17.6px;height:11.2px;background:#fff;border-left:1px solid #e4e4e4;"></div>
<div style="position:absolute;left:145.2px;top:8.8px;width:17.6px;height:9.5px;border-left:1px solid #e2e2e2;"></div>
<div style="position:absolute;left:145.2px;top:8.8px;width:17.6px;height:9.5px;line-height:9.9px;text-align:center;font-size:6.4px;color:#666">3</div>
<div style="position:absolute;left:145.2px;top:18.3px;width:17.6px;height:11.2px;line-height:11.399999999999999px;text-align:center;font-size:6.4px;color:#3a1a2e;"><span style="display:inline-block;transform:scaleX(0.86);-webkit-text-stroke:0.2px #3a1a2e">0</span></div>
<div style="position:absolute;left:162.8px;top:18.3px;width:17.6px;height:11.2px;background:#fff;border-left:1px solid #e4e4e4;"></div>
<div style="position:absolute;left:162.8px;top:8.8px;width:17.6px;height:9.5px;border-left:1px solid #e2e2e2;"></div>
<div style="position:absolute;left:162.8px;top:8.8px;width:17.6px;height:9.5px;line-height:9.9px;text-align:center;font-size:6.4px;color:#666">2</div>
<div style="position:absolute;left:162.8px;top:18.3px;width:17.6px;height:11.2px;line-height:11.399999999999999px;text-align:center;font-size:6.4px;color:#3a1a2e;"><span style="display:inline-block;transform:scaleX(0.86);-webkit-text-stroke:0.2px #3a1a2e">0</span></div>
<div style="position:absolute;left:180.4px;top:18.3px;width:17.6px;height:11.2px;background:#fff;border-left:1px solid #e4e4e4;"></div>
<div style="position:absolute;left:180.4px;top:8.8px;width:17.6px;height:9.5px;border-left:1px solid #e2e2e2;"></div>
<div style="position:absolute;left:180.4px;top:8.8px;width:17.6px;height:9.5px;line-height:9.9px;text-align:center;font-size:6.4px;color:#666">1</div>
<div style="position:absolute;left:180.4px;top:18.3px;width:17.6px;height:11.2px;line-height:11.399999999999999px;text-align:center;font-size:6.4px;color:#3a1a2e;"><span style="display:inline-block;transform:scaleX(0.86);-webkit-text-stroke:0.2px #3a1a2e">0</span></div>
<div style="position:absolute;left:198.0px;top:18.3px;width:17.6px;height:11.2px;background:#fff;border-left:1px solid #e4e4e4;"></div>
<div style="position:absolute;left:198.0px;top:8.8px;width:17.6px;height:9.5px;border-left:1px solid #e2e2e2;"></div>
<div style="position:absolute;left:198.0px;top:8.8px;width:17.6px;height:9.5px;line-height:9.9px;text-align:center;font-size:6.4px;color:#666">0</div>
<div style="position:absolute;left:198.0px;top:18.3px;width:17.6px;height:11.2px;line-height:11.399999999999999px;text-align:center;font-size:6.4px;color:#3a1a2e;"><span style="display:inline-block;transform:scaleX(0.86);-webkit-text-stroke:0.2px #3a1a2e">0</span></div>
<div style="position:absolute;left:216.1px;top:0;width:140.8px;height:8.8px;line-height:9.2px;text-align:center;font-size:5.5px;color:#444;white-space:nowrap;">Address - 0x1107 (Value - HEX: 0x00, DEC: 0)</div>
<div style="position:absolute;left:215.6px;top:0;width:1px;height:8.8px;background:#dadada"></div>
<div style="position:absolute;left:215.6px;top:18.3px;width:17.6px;height:11.2px;background:#fff;border-left:1px solid #e4e4e4;"></div>
<div style="position:absolute;left:215.6px;top:8.8px;width:17.6px;height:9.5px;border-left:1px solid #e2e2e2;"></div>
<div style="position:absolute;left:215.6px;top:8.8px;width:17.6px;height:9.5px;line-height:9.9px;text-align:center;font-size:6.4px;color:#666">7</div>
<div style="position:absolute;left:215.6px;top:18.3px;width:17.6px;height:11.2px;line-height:11.399999999999999px;text-align:center;font-size:6.4px;color:#3a1a2e;"><span style="display:inline-block;transform:scaleX(0.86);-webkit-text-stroke:0.2px #3a1a2e">0</span></div>
<div style="position:absolute;left:233.2px;top:18.3px;width:17.6px;height:11.2px;background:#fff;border-left:1px solid #e4e4e4;"></div>
<div style="position:absolute;left:233.2px;top:8.8px;width:17.6px;height:9.5px;border-left:1px solid #e2e2e2;"></div>
<div style="position:absolute;left:233.2px;top:8.8px;width:17.6px;height:9.5px;line-height:9.9px;text-align:center;font-size:6.4px;color:#666">6</div>
<div style="position:absolute;left:233.2px;top:18.3px;width:17.6px;height:11.2px;line-height:11.399999999999999px;text-align:center;font-size:6.4px;color:#3a1a2e;"><span style="display:inline-block;transform:scaleX(0.86);-webkit-text-stroke:0.2px #3a1a2e">0</span></div>
<div style="position:absolute;left:250.8px;top:18.3px;width:17.6px;height:11.2px;background:#fff;border-left:1px solid #e4e4e4;"></div>
<div style="position:absolute;left:250.8px;top:8.8px;width:17.6px;height:9.5px;border-left:1px solid #e2e2e2;"></div>
<div style="position:absolute;left:250.8px;top:8.8px;width:17.6px;height:9.5px;line-height:9.9px;text-align:center;font-size:6.4px;color:#666">5</div>
<div style="position:absolute;left:250.8px;top:18.3px;width:17.6px;height:11.2px;line-height:11.399999999999999px;text-align:center;font-size:6.4px;color:#3a1a2e;"><span style="display:inline-block;transform:scaleX(0.86);-webkit-text-stroke:0.2px #3a1a2e">0</span></div>
<div style="position:absolute;left:268.4px;top:18.3px;width:17.6px;height:11.2px;background:#fff;border-left:1px solid #e4e4e4;"></div>
<div style="position:absolute;left:268.4px;top:8.8px;width:17.6px;height:9.5px;border-left:1px solid #e2e2e2;"></div>
<div style="position:absolute;left:268.4px;top:8.8px;width:17.6px;height:9.5px;line-height:9.9px;text-align:center;font-size:6.4px;color:#666">4</div>
<div style="position:absolute;left:268.4px;top:18.3px;width:17.6px;height:11.2px;line-height:11.399999999999999px;text-align:center;font-size:6.4px;color:#3a1a2e;"><span style="display:inline-block;transform:scaleX(0.86);-webkit-text-stroke:0.2px #3a1a2e">0</span></div>
<div style="position:absolute;left:286.0px;top:18.3px;width:17.6px;height:11.2px;background:#fff;border-left:1px solid #e4e4e4;"></div>
<div style="position:absolute;left:286.0px;top:8.8px;width:17.6px;height:9.5px;border-left:1px solid #e2e2e2;"></div>
<div style="position:absolute;left:286.0px;top:8.8px;width:17.6px;height:9.5px;line-height:9.9px;text-align:center;font-size:6.4px;color:#666">3</div>
<div style="position:absolute;left:286.0px;top:18.3px;width:17.6px;height:11.2px;line-height:11.399999999999999px;text-align:center;font-size:6.4px;color:#3a1a2e;"><span style="display:inline-block;transform:scaleX(0.86);-webkit-text-stroke:0.2px #3a1a2e">0</span></div>
<div style="position:absolute;left:303.6px;top:18.3px;width:17.6px;height:11.2px;background:#fff;border-left:1px solid #e4e4e4;"></div>
<div style="position:absolute;left:303.6px;top:8.8px;width:17.6px;height:9.5px;border-left:1px solid #e2e2e2;"></div>
<div style="position:absolute;left:303.6px;top:8.8px;width:17.6px;height:9.5px;line-height:9.9px;text-align:center;font-size:6.4px;color:#666">2</div>
<div style="position:absolute;left:303.6px;top:18.3px;width:17.6px;height:11.2px;line-height:11.399999999999999px;text-align:center;font-size:6.4px;color:#3a1a2e;"><span style="display:inline-block;transform:scaleX(0.86);-webkit-text-stroke:0.2px #3a1a2e">0</span></div>
<div style="position:absolute;left:321.2px;top:18.3px;width:17.6px;height:11.2px;background:#fff;border-left:1px solid #e4e4e4;"></div>
<div style="position:absolute;left:321.2px;top:8.8px;width:17.6px;height:9.5px;border-left:1px solid #e2e2e2;"></div>
<div style="position:absolute;left:321.2px;top:8.8px;width:17.6px;height:9.5px;line-height:9.9px;text-align:center;font-size:6.4px;color:#666">1</div>
<div style="position:absolute;left:321.2px;top:18.3px;width:17.6px;height:11.2px;line-height:11.399999999999999px;text-align:center;font-size:6.4px;color:#3a1a2e;"><span style="display:inline-block;transform:scaleX(0.86);-webkit-text-stroke:0.2px #3a1a2e">0</span></div>
<div style="position:absolute;left:338.8px;top:18.3px;width:17.6px;height:11.2px;background:#fff;border-left:1px solid #e4e4e4;"></div>
<div style="position:absolute;left:338.8px;top:8.8px;width:17.6px;height:9.5px;border-left:1px solid #e2e2e2;"></div>
<div style="position:absolute;left:338.8px;top:8.8px;width:17.6px;height:9.5px;line-height:9.9px;text-align:center;font-size:6.4px;color:#666">0</div>
<div style="position:absolute;left:338.8px;top:18.3px;width:17.6px;height:11.2px;line-height:11.399999999999999px;text-align:center;font-size:6.4px;color:#3a1a2e;"><span style="display:inline-block;transform:scaleX(0.86);-webkit-text-stroke:0.2px #3a1a2e">0</span></div>
<div style="position:absolute;left:356.9px;top:0;width:140.8px;height:8.8px;line-height:9.2px;text-align:center;font-size:5.5px;color:#444;white-space:nowrap;">Address - 0x1106 (Value - HEX: 0x00, DEC: 0)</div>
<div style="position:absolute;left:356.4px;top:0;width:1px;height:8.8px;background:#dadada"></div>
<div style="position:absolute;left:356.4px;top:18.3px;width:17.6px;height:11.2px;background:#fff;border-left:1px solid #e4e4e4;"></div>
<div style="position:absolute;left:356.4px;top:8.8px;width:17.6px;height:9.5px;border-left:1px solid #e2e2e2;"></div>
<div style="position:absolute;left:356.4px;top:8.8px;width:17.6px;height:9.5px;line-height:9.9px;text-align:center;font-size:6.4px;color:#666">7</div>
<div style="position:absolute;left:356.4px;top:18.3px;width:17.6px;height:11.2px;line-height:11.399999999999999px;text-align:center;font-size:6.4px;color:#3a1a2e;"><span style="display:inline-block;transform:scaleX(0.86);-webkit-text-stroke:0.2px #3a1a2e">0</span></div>
<div style="position:absolute;left:374.0px;top:18.3px;width:17.6px;height:11.2px;background:#fff;border-left:1px solid #e4e4e4;"></div>
<div style="position:absolute;left:374.0px;top:8.8px;width:17.6px;height:9.5px;border-left:1px solid #e2e2e2;"></div>
<div style="position:absolute;left:374.0px;top:8.8px;width:17.6px;height:9.5px;line-height:9.9px;text-align:center;font-size:6.4px;color:#666">6</div>
<div style="position:absolute;left:374.0px;top:18.3px;width:17.6px;height:11.2px;line-height:11.399999999999999px;text-align:center;font-size:6.4px;color:#3a1a2e;"><span style="display:inline-block;transform:scaleX(0.86);-webkit-text-stroke:0.2px #3a1a2e">0</span></div>
<div style="position:absolute;left:391.6px;top:18.3px;width:17.6px;height:11.2px;background:#fff;border-left:1px solid #e4e4e4;"></div>
<div style="position:absolute;left:391.6px;top:8.8px;width:17.6px;height:9.5px;border-left:1px solid #e2e2e2;"></div>
<div style="position:absolute;left:391.6px;top:8.8px;width:17.6px;height:9.5px;line-height:9.9px;text-align:center;font-size:6.4px;color:#666">5</div>
<div style="position:absolute;left:391.6px;top:18.3px;width:17.6px;height:11.2px;line-height:11.399999999999999px;text-align:center;font-size:6.4px;color:#3a1a2e;"><span style="display:inline-block;transform:scaleX(0.86);-webkit-text-stroke:0.2px #3a1a2e">0</span></div>
<div style="position:absolute;left:409.2px;top:18.3px;width:17.6px;height:11.2px;background:#fff;border-left:1px solid #e4e4e4;"></div>
<div style="position:absolute;left:409.2px;top:8.8px;width:17.6px;height:9.5px;border-left:1px solid #e2e2e2;"></div>
<div style="position:absolute;left:409.2px;top:8.8px;width:17.6px;height:9.5px;line-height:9.9px;text-align:center;font-size:6.4px;color:#666">4</div>
<div style="position:absolute;left:409.2px;top:18.3px;width:17.6px;height:11.2px;line-height:11.399999999999999px;text-align:center;font-size:6.4px;color:#3a1a2e;"><span style="display:inline-block;transform:scaleX(0.86);-webkit-text-stroke:0.2px #3a1a2e">0</span></div>
<div style="position:absolute;left:426.8px;top:18.3px;width:17.6px;height:11.2px;background:#fff;border-left:1px solid #e4e4e4;"></div>
<div style="position:absolute;left:426.8px;top:8.8px;width:17.6px;height:9.5px;border-left:1px solid #e2e2e2;"></div>
<div style="position:absolute;left:426.8px;top:8.8px;width:17.6px;height:9.5px;line-height:9.9px;text-align:center;font-size:6.4px;color:#666">3</div>
<div style="position:absolute;left:426.8px;top:18.3px;width:17.6px;height:11.2px;line-height:11.399999999999999px;text-align:center;font-size:6.4px;color:#3a1a2e;"><span style="display:inline-block;transform:scaleX(0.86);-webkit-text-stroke:0.2px #3a1a2e">0</span></div>
<div style="position:absolute;left:444.4px;top:18.3px;width:17.6px;height:11.2px;background:#fff;border-left:1px solid #e4e4e4;"></div>
<div style="position:absolute;left:444.4px;top:8.8px;width:17.6px;height:9.5px;border-left:1px solid #e2e2e2;"></div>
<div style="position:absolute;left:444.4px;top:8.8px;width:17.6px;height:9.5px;line-height:9.9px;text-align:center;font-size:6.4px;color:#666">2</div>
<div style="position:absolute;left:444.4px;top:18.3px;width:17.6px;height:11.2px;line-height:11.399999999999999px;text-align:center;font-size:6.4px;color:#3a1a2e;"><span style="display:inline-block;transform:scaleX(0.86);-webkit-text-stroke:0.2px #3a1a2e">0</span></div>
<div style="position:absolute;left:462.0px;top:18.3px;width:17.6px;height:11.2px;background:#fff;border-left:1px solid #e4e4e4;"></div>
<div style="position:absolute;left:462.0px;top:8.8px;width:17.6px;height:9.5px;border-left:1px solid #e2e2e2;"></div>
<div style="position:absolute;left:462.0px;top:8.8px;width:17.6px;height:9.5px;line-height:9.9px;text-align:center;font-size:6.4px;color:#666">1</div>
<div style="position:absolute;left:462.0px;top:18.3px;width:17.6px;height:11.2px;line-height:11.399999999999999px;text-align:center;font-size:6.4px;color:#3a1a2e;"><span style="display:inline-block;transform:scaleX(0.86);-webkit-text-stroke:0.2px #3a1a2e">0</span></div>
<div style="position:absolute;left:479.6px;top:18.3px;width:17.6px;height:11.2px;background:#fff;border-left:1px solid #e4e4e4;"></div>
<div style="position:absolute;left:479.6px;top:8.8px;width:17.6px;height:9.5px;border-left:1px solid #e2e2e2;"></div>
<div style="position:absolute;left:479.6px;top:8.8px;width:17.6px;height:9.5px;line-height:9.9px;text-align:center;font-size:6.4px;color:#666">0</div>
<div style="position:absolute;left:479.6px;top:18.3px;width:17.6px;height:11.2px;line-height:11.399999999999999px;text-align:center;font-size:6.4px;color:#3a1a2e;"><span style="display:inline-block;transform:scaleX(0.86);-webkit-text-stroke:0.2px #3a1a2e">0</span></div>
<div style="position:absolute;left:497.7px;top:0;width:140.8px;height:8.8px;line-height:9.2px;text-align:center;font-size:5.5px;color:#444;white-space:nowrap;">Address - 0x1105 (Value - HEX: 0x00, DEC: 0)</div>
<div style="position:absolute;left:497.2px;top:0;width:1px;height:8.8px;background:#dadada"></div>
<div style="position:absolute;left:497.2px;top:18.3px;width:17.6px;height:11.2px;background:#fff;border-left:1px solid #e4e4e4;"></div>
<div style="position:absolute;left:497.2px;top:8.8px;width:17.6px;height:9.5px;border-left:1px solid #e2e2e2;"></div>
<div style="position:absolute;left:497.2px;top:8.8px;width:17.6px;height:9.5px;line-height:9.9px;text-align:center;font-size:6.4px;color:#666">7</div>
<div style="position:absolute;left:497.2px;top:18.3px;width:17.6px;height:11.2px;line-height:11.399999999999999px;text-align:center;font-size:6.4px;color:#3a1a2e;"><span style="display:inline-block;transform:scaleX(0.86);-webkit-text-stroke:0.2px #3a1a2e">0</span></div>
<div style="position:absolute;left:514.8px;top:18.3px;width:17.6px;height:11.2px;background:#fff;border-left:1px solid #e4e4e4;"></div>
<div style="position:absolute;left:514.8px;top:8.8px;width:17.6px;height:9.5px;border-left:1px solid #e2e2e2;"></div>
<div style="position:absolute;left:514.8px;top:8.8px;width:17.6px;height:9.5px;line-height:9.9px;text-align:center;font-size:6.4px;color:#666">6</div>
<div style="position:absolute;left:514.8px;top:18.3px;width:17.6px;height:11.2px;line-height:11.399999999999999px;text-align:center;font-size:6.4px;color:#3a1a2e;"><span style="display:inline-block;transform:scaleX(0.86);-webkit-text-stroke:0.2px #3a1a2e">0</span></div>
<div style="position:absolute;left:532.4px;top:18.3px;width:17.6px;height:11.2px;background:#fff;border-left:1px solid #e4e4e4;"></div>
<div style="position:absolute;left:532.4px;top:8.8px;width:17.6px;height:9.5px;border-left:1px solid #e2e2e2;"></div>
<div style="position:absolute;left:532.4px;top:8.8px;width:17.6px;height:9.5px;line-height:9.9px;text-align:center;font-size:6.4px;color:#666">5</div>
<div style="position:absolute;left:532.4px;top:18.3px;width:17.6px;height:11.2px;line-height:11.399999999999999px;text-align:center;font-size:6.4px;color:#3a1a2e;"><span style="display:inline-block;transform:scaleX(0.86);-webkit-text-stroke:0.2px #3a1a2e">0</span></div>
<div style="position:absolute;left:550.0px;top:18.3px;width:17.6px;height:11.2px;background:#fff;border-left:1px solid #e4e4e4;"></div>
<div style="position:absolute;left:550.0px;top:8.8px;width:17.6px;height:9.5px;border-left:1px solid #e2e2e2;"></div>
<div style="position:absolute;left:550.0px;top:8.8px;width:17.6px;height:9.5px;line-height:9.9px;text-align:center;font-size:6.4px;color:#666">4</div>
<div style="position:absolute;left:550.0px;top:18.3px;width:17.6px;height:11.2px;line-height:11.399999999999999px;text-align:center;font-size:6.4px;color:#3a1a2e;"><span style="display:inline-block;transform:scaleX(0.86);-webkit-text-stroke:0.2px #3a1a2e">0</span></div>
<div style="position:absolute;left:567.6px;top:18.3px;width:17.6px;height:11.2px;background:#fff;border-left:1px solid #e4e4e4;"></div>
<div style="position:absolute;left:567.6px;top:8.8px;width:17.6px;height:9.5px;border-left:1px solid #e2e2e2;"></div>
<div style="position:absolute;left:567.6px;top:8.8px;width:17.6px;height:9.5px;line-height:9.9px;text-align:center;font-size:6.4px;color:#666">3</div>
<div style="position:absolute;left:567.6px;top:18.3px;width:17.6px;height:11.2px;line-height:11.399999999999999px;text-align:center;font-size:6.4px;color:#3a1a2e;"><span style="display:inline-block;transform:scaleX(0.86);-webkit-text-stroke:0.2px #3a1a2e">0</span></div>
<div style="position:absolute;left:585.2px;top:18.3px;width:17.6px;height:11.2px;background:#fff;border-left:1px solid #e4e4e4;"></div>
<div style="position:absolute;left:585.2px;top:8.8px;width:17.6px;height:9.5px;border-left:1px solid #e2e2e2;"></div>
<div style="position:absolute;left:585.2px;top:8.8px;width:17.6px;height:9.5px;line-height:9.9px;text-align:center;font-size:6.4px;color:#666">2</div>
<div style="position:absolute;left:585.2px;top:18.3px;width:17.6px;height:11.2px;line-height:11.399999999999999px;text-align:center;font-size:6.4px;color:#3a1a2e;"><span style="display:inline-block;transform:scaleX(0.86);-webkit-text-stroke:0.2px #3a1a2e">0</span></div>
<div style="position:absolute;left:602.8px;top:18.3px;width:17.6px;height:11.2px;background:#fff;border-left:1px solid #e4e4e4;"></div>
<div style="position:absolute;left:602.8px;top:8.8px;width:17.6px;height:9.5px;border-left:1px solid #e2e2e2;"></div>
<div style="position:absolute;left:602.8px;top:8.8px;width:17.6px;height:9.5px;line-height:9.9px;text-align:center;font-size:6.4px;color:#666">1</div>
<div style="position:absolute;left:602.8px;top:18.3px;width:17.6px;height:11.2px;line-height:11.399999999999999px;text-align:center;font-size:6.4px;color:#3a1a2e;"><span style="display:inline-block;transform:scaleX(0.86);-webkit-text-stroke:0.2px #3a1a2e">0</span></div>
<div style="position:absolute;left:620.4px;top:18.3px;width:17.6px;height:11.2px;background:#fff;border-left:1px solid #e4e4e4;"></div>
<div style="position:absolute;left:620.4px;top:8.8px;width:17.6px;height:9.5px;border-left:1px solid #e2e2e2;"></div>
<div style="position:absolute;left:620.4px;top:8.8px;width:17.6px;height:9.5px;line-height:9.9px;text-align:center;font-size:6.4px;color:#666">0</div>
<div style="position:absolute;left:620.4px;top:18.3px;width:17.6px;height:11.2px;line-height:11.399999999999999px;text-align:center;font-size:6.4px;color:#3a1a2e;"><span style="display:inline-block;transform:scaleX(0.86);-webkit-text-stroke:0.2px #3a1a2e">0</span></div>
<div style="position:absolute;left:638.5px;top:0;width:140.8px;height:8.8px;line-height:9.2px;text-align:center;font-size:5.5px;color:#444;white-space:nowrap;">Address - 0x1102 (Value - HEX: 0x00, DEC: 0)</div>
<div style="position:absolute;left:638.0px;top:0;width:1px;height:8.8px;background:#dadada"></div>
<div style="position:absolute;left:638.0px;top:18.3px;width:17.6px;height:11.2px;background:#fff;border-left:1px solid #e4e4e4;"></div>
<div style="position:absolute;left:638.0px;top:8.8px;width:17.6px;height:9.5px;border-left:1px solid #e2e2e2;"></div>
<div style="position:absolute;left:638.0px;top:8.8px;width:17.6px;height:9.5px;line-height:9.9px;text-align:center;font-size:6.4px;color:#666">7</div>
<div style="position:absolute;left:638.0px;top:18.3px;width:17.6px;height:11.2px;line-height:11.399999999999999px;text-align:center;font-size:6.4px;color:#3a1a2e;"><span style="display:inline-block;transform:scaleX(0.86);-webkit-text-stroke:0.2px #3a1a2e">0</span></div>
<div style="position:absolute;left:655.6px;top:18.3px;width:17.6px;height:11.2px;background:#fff;border-left:1px solid #e4e4e4;"></div>
<div style="position:absolute;left:655.6px;top:8.8px;width:17.6px;height:9.5px;border-left:1px solid #e2e2e2;"></div>
<div style="position:absolute;left:655.6px;top:8.8px;width:17.6px;height:9.5px;line-height:9.9px;text-align:center;font-size:6.4px;color:#666">6</div>
<div style="position:absolute;left:655.6px;top:18.3px;width:17.6px;height:11.2px;line-height:11.399999999999999px;text-align:center;font-size:6.4px;color:#3a1a2e;"><span style="display:inline-block;transform:scaleX(0.86);-webkit-text-stroke:0.2px #3a1a2e">0</span></div>
<div style="position:absolute;left:673.2px;top:18.3px;width:17.6px;height:11.2px;background:#fff;border-left:1px solid #e4e4e4;"></div>
<div style="position:absolute;left:673.2px;top:8.8px;width:17.6px;height:9.5px;border-left:1px solid #e2e2e2;"></div>
<div style="position:absolute;left:673.2px;top:8.8px;width:17.6px;height:9.5px;line-height:9.9px;text-align:center;font-size:6.4px;color:#666">5</div>
<div style="position:absolute;left:673.2px;top:18.3px;width:17.6px;height:11.2px;line-height:11.399999999999999px;text-align:center;font-size:6.4px;color:#3a1a2e;"><span style="display:inline-block;transform:scaleX(0.86);-webkit-text-stroke:0.2px #3a1a2e">0</span></div>
<div style="position:absolute;left:690.8px;top:18.3px;width:17.6px;height:11.2px;background:#fff;border-left:1px solid #e4e4e4;"></div>
<div style="position:absolute;left:690.8px;top:8.8px;width:17.6px;height:9.5px;border-left:1px solid #e2e2e2;"></div>
<div style="position:absolute;left:690.8px;top:8.8px;width:17.6px;height:9.5px;line-height:9.9px;text-align:center;font-size:6.4px;color:#666">4</div>
<div style="position:absolute;left:690.8px;top:18.3px;width:17.6px;height:11.2px;line-height:11.399999999999999px;text-align:center;font-size:6.4px;color:#3a1a2e;"><span style="display:inline-block;transform:scaleX(0.86);-webkit-text-stroke:0.2px #3a1a2e">0</span></div>
<div style="position:absolute;left:708.4px;top:18.3px;width:17.6px;height:11.2px;background:#fff;border-left:1px solid #e4e4e4;"></div>
<div style="position:absolute;left:708.4px;top:8.8px;width:17.6px;height:9.5px;border-left:1px solid #e2e2e2;"></div>
<div style="position:absolute;left:708.4px;top:8.8px;width:17.6px;height:9.5px;line-height:9.9px;text-align:center;font-size:6.4px;color:#666">3</div>
<div style="position:absolute;left:708.4px;top:18.3px;width:17.6px;height:11.2px;line-height:11.399999999999999px;text-align:center;font-size:6.4px;color:#3a1a2e;"><span style="display:inline-block;transform:scaleX(0.86);-webkit-text-stroke:0.2px #3a1a2e">0</span></div>
<div style="position:absolute;left:726.0px;top:18.3px;width:17.6px;height:11.2px;background:#fff;border-left:1px solid #e4e4e4;"></div>
<div style="position:absolute;left:726.0px;top:8.8px;width:17.6px;height:9.5px;border-left:1px solid #e2e2e2;"></div>
<div style="position:absolute;left:726.0px;top:8.8px;width:17.6px;height:9.5px;line-height:9.9px;text-align:center;font-size:6.4px;color:#666">2</div>
<div style="position:absolute;left:726.0px;top:18.3px;width:17.6px;height:11.2px;line-height:11.399999999999999px;text-align:center;font-size:6.4px;color:#3a1a2e;"><span style="display:inline-block;transform:scaleX(0.86);-webkit-text-stroke:0.2px #3a1a2e">0</span></div>
<div style="position:absolute;left:743.6px;top:18.3px;width:17.6px;height:11.2px;background:#fff;border-left:1px solid #e4e4e4;"></div>
<div style="position:absolute;left:743.6px;top:8.8px;width:17.6px;height:9.5px;border-left:1px solid #e2e2e2;"></div>
<div style="position:absolute;left:743.6px;top:8.8px;width:17.6px;height:9.5px;line-height:9.9px;text-align:center;font-size:6.4px;color:#666">1</div>
<div style="position:absolute;left:743.6px;top:18.3px;width:17.6px;height:11.2px;line-height:11.399999999999999px;text-align:center;font-size:6.4px;color:#3a1a2e;"><span style="display:inline-block;transform:scaleX(0.86);-webkit-text-stroke:0.2px #3a1a2e">0</span></div>
<div style="position:absolute;left:761.2px;top:18.3px;width:17.6px;height:11.2px;background:#fff;border-left:1px solid #e4e4e4;"></div>
<div style="position:absolute;left:761.2px;top:8.8px;width:17.6px;height:9.5px;border-left:1px solid #e2e2e2;"></div>
<div style="position:absolute;left:761.2px;top:8.8px;width:17.6px;height:9.5px;line-height:9.9px;text-align:center;font-size:6.4px;color:#666">0</div>
<div style="position:absolute;left:761.2px;top:18.3px;width:17.6px;height:11.2px;line-height:11.399999999999999px;text-align:center;font-size:6.4px;color:#3a1a2e;"><span style="display:inline-block;transform:scaleX(0.86);-webkit-text-stroke:0.2px #3a1a2e">0</span></div>
<div style="position:absolute;left:779.3px;top:0;width:140.8px;height:8.8px;line-height:9.2px;text-align:center;font-size:5.5px;color:#444;white-space:nowrap;">Address - 0x1101 (Value - HEX: 0x01, DEC: 1)</div>
<div style="position:absolute;left:778.8px;top:0;width:1px;height:8.8px;background:#dadada"></div>
<div style="position:absolute;left:778.8px;top:18.3px;width:17.6px;height:11.2px;background:#fff;border-left:1px solid #e4e4e4;"></div>
<div style="position:absolute;left:778.8px;top:8.8px;width:17.6px;height:9.5px;border-left:1px solid #e2e2e2;"></div>
<div style="position:absolute;left:778.8px;top:8.8px;width:17.6px;height:9.5px;line-height:9.9px;text-align:center;font-size:6.4px;color:#666">7</div>
<div style="position:absolute;left:778.8px;top:18.3px;width:17.6px;height:11.2px;line-height:11.399999999999999px;text-align:center;font-size:6.4px;color:#3a1a2e;"><span style="display:inline-block;transform:scaleX(0.86);-webkit-text-stroke:0.2px #3a1a2e">0</span></div>
<div style="position:absolute;left:796.4px;top:18.3px;width:17.6px;height:11.2px;background:#fff;border-left:1px solid #e4e4e4;"></div>
<div style="position:absolute;left:796.4px;top:8.8px;width:17.6px;height:9.5px;border-left:1px solid #e2e2e2;"></div>
<div style="position:absolute;left:796.4px;top:8.8px;width:17.6px;height:9.5px;line-height:9.9px;text-align:center;font-size:6.4px;color:#666">6</div>
<div style="position:absolute;left:796.4px;top:18.3px;width:17.6px;height:11.2px;line-height:11.399999999999999px;text-align:center;font-size:6.4px;color:#3a1a2e;"><span style="display:inline-block;transform:scaleX(0.86);-webkit-text-stroke:0.2px #3a1a2e">0</span></div>
<div style="position:absolute;left:814.0px;top:18.3px;width:17.6px;height:11.2px;background:#fff;border-left:1px solid #e4e4e4;"></div>
<div style="position:absolute;left:814.0px;top:8.8px;width:17.6px;height:9.5px;border-left:1px solid #e2e2e2;"></div>
<div style="position:absolute;left:814.0px;top:8.8px;width:17.6px;height:9.5px;line-height:9.9px;text-align:center;font-size:6.4px;color:#666">5</div>
<div style="position:absolute;left:814.0px;top:18.3px;width:17.6px;height:11.2px;line-height:11.399999999999999px;text-align:center;font-size:6.4px;color:#3a1a2e;"><span style="display:inline-block;transform:scaleX(0.86);-webkit-text-stroke:0.2px #3a1a2e">0</span></div>
<div style="position:absolute;left:831.6px;top:18.3px;width:17.6px;height:11.2px;background:#fff;border-left:1px solid #e4e4e4;"></div>
<div style="position:absolute;left:831.6px;top:8.8px;width:17.6px;height:9.5px;border-left:1px solid #e2e2e2;"></div>
<div style="position:absolute;left:831.6px;top:8.8px;width:17.6px;height:9.5px;line-height:9.9px;text-align:center;font-size:6.4px;color:#666">4</div>
<div style="position:absolute;left:831.6px;top:18.3px;width:17.6px;height:11.2px;line-height:11.399999999999999px;text-align:center;font-size:6.4px;color:#3a1a2e;"><span style="display:inline-block;transform:scaleX(0.86);-webkit-text-stroke:0.2px #3a1a2e">0</span></div>
<div style="position:absolute;left:849.2px;top:18.3px;width:17.6px;height:11.2px;background:#fff;border-left:1px solid #e4e4e4;"></div>
<div style="position:absolute;left:849.2px;top:8.8px;width:17.6px;height:9.5px;border-left:1px solid #e2e2e2;"></div>
<div style="position:absolute;left:849.2px;top:8.8px;width:17.6px;height:9.5px;line-height:9.9px;text-align:center;font-size:6.4px;color:#666">3</div>
<div style="position:absolute;left:849.2px;top:18.3px;width:17.6px;height:11.2px;line-height:11.399999999999999px;text-align:center;font-size:6.4px;color:#3a1a2e;"><span style="display:inline-block;transform:scaleX(0.86);-webkit-text-stroke:0.2px #3a1a2e">0</span></div>
<div style="position:absolute;left:866.8px;top:18.3px;width:17.6px;height:11.2px;background:#fff;border-left:1px solid #e4e4e4;"></div>
<div style="position:absolute;left:866.8px;top:8.8px;width:17.6px;height:9.5px;border-left:1px solid #e2e2e2;"></div>
<div style="position:absolute;left:866.8px;top:8.8px;width:17.6px;height:9.5px;line-height:9.9px;text-align:center;font-size:6.4px;color:#666">2</div>
<div style="position:absolute;left:866.8px;top:18.3px;width:17.6px;height:11.2px;line-height:11.399999999999999px;text-align:center;font-size:6.4px;color:#3a1a2e;"><span style="display:inline-block;transform:scaleX(0.86);-webkit-text-stroke:0.2px #3a1a2e">0</span></div>
<div style="position:absolute;left:884.4px;top:18.3px;width:17.6px;height:11.2px;background:#fff;border-left:1px solid #e4e4e4;"></div>
<div style="position:absolute;left:884.4px;top:8.8px;width:17.6px;height:9.5px;border-left:1px solid #e2e2e2;"></div>
<div style="position:absolute;left:884.4px;top:8.8px;width:17.6px;height:9.5px;line-height:9.9px;text-align:center;font-size:6.4px;color:#8aaa6a">1</div>
<div style="position:absolute;left:884.4px;top:18.3px;width:17.6px;height:11.2px;line-height:11.399999999999999px;text-align:center;font-size:6.4px;color:#3a1a2e;"><span style="display:inline-block;transform:scaleX(0.86);-webkit-text-stroke:0.2px #3a1a2e">0</span></div>
<div style="position:absolute;left:902.0px;top:18.3px;width:17.6px;height:11.2px;background:#d2d2d2;border-left:1px solid #e4e4e4;"></div>
<div style="position:absolute;left:902.0px;top:8.8px;width:17.6px;height:9.5px;border-left:1px solid #e2e2e2;"></div>
<div style="position:absolute;left:902.0px;top:8.8px;width:17.6px;height:9.5px;line-height:9.9px;text-align:center;font-size:6.4px;color:#666">0</div>
<div style="position:absolute;left:902.0px;top:18.3px;width:17.6px;height:11.2px;line-height:11.399999999999999px;text-align:center;font-size:6.4px;color:#3a8a3a;"><span style="display:inline-block;transform:scaleX(0.86);-webkit-text-stroke:0.2px #3a8a3a">1</span></div>
</div>
<div style="position:absolute;left:5px;top:122.5px;width:920px;height:8.5px;background:#e8e8e8;border-bottom:1px solid #d4d4d4;"></div>
<svg style="position:absolute;left:7.5px;top:124.5px;overflow:visible" width="3" height="4" viewBox="0 0 3 4"><path d="M2.5 0L0 2L2.5 4Z" fill="#333"/></svg>
<svg style="position:absolute;left:920.5px;top:124.5px;overflow:visible" width="3" height="4" viewBox="0 0 3 4"><path d="M0.5 0L3 2L0.5 4Z" fill="#333"/></svg>
<div style="position:absolute;left:896px;top:123px;width:22px;height:6.5px;background:linear-gradient(#fafafa,#f0f0f0);border:1px solid #dadada;border-radius:1px;"></div>
<div style="position:absolute;left:5px;top:122.5px;width:6px;height:7.5px;background:#e0e0e0;"></div>
<div style="position:absolute;left:925px;top:82.8px;width:43px;height:47.5px;background:#f0f0f0;"></div>
<div style="position:absolute;left:927.9px;top:86px;width:39.1px;height:9.5px;background:#fff;border:1px solid #d8d8d8;"></div>
<div style="position:absolute;left:930px;top:85.5px;height:10.6px;line-height:10.6px;font-size:5.3px;color:#444;white-space:nowrap;">0x1101</div>
<svg style="position:absolute;left:962.5px;top:86.8px;overflow:visible" width="3" height="8" viewBox="0 0 3 8"><path d="M0 3L1.5 1L3 3Z M0 5L1.5 7L3 5Z" fill="#555"/></svg>
<div style="position:absolute;left:961.5px;top:86.5px;width:1px;height:8.5px;background:#e4e4e4;"></div>
<div style="position:absolute;left:928.4px;top:99.6px;width:6.2px;height:6.6px;background:#fff;border:1px solid #cfcfcf;"></div>
<svg style="position:absolute;left:929px;top:100.5px;overflow:visible" width="5" height="5" viewBox="0 0 5 5"><path d="M0.5 2.4L2 4.3L4.6 0.3" stroke="#111" stroke-width="1.15" fill="none"/></svg>
<div style="position:absolute;left:937px;top:97.60000000000001px;height:11.2px;line-height:11.2px;font-size:5.6px;color:#333;white-space:nowrap;">Autofit</div>
<div style="position:absolute;left:927.9px;top:109.7px;width:39.1px;height:18.3px;background:linear-gradient(#fbfbfb,#eeeeee);border:1px solid #d2d2d2;border-radius:2px;"></div>
<div style="position:absolute;left:928.0px;top:113.80000000000001px;width:39px;height:11.2px;line-height:11.2px;text-align:center;font-size:5.6px;color:#333;white-space:nowrap;">Go to byte</div>
<div style="position:absolute;left:7px;top:132.9px;height:11.2px;line-height:11.2px;font-size:5.6px;color:#444;white-space:nowrap;">Properties</div>
<svg style="position:absolute;left:116.5px;top:135.4px;overflow:visible" width="6" height="6" viewBox="0 0 6 6"><rect x="0.3" y="0.3" width="5.4" height="5.4" rx="1.5" fill="#dedede" stroke="#b0b0b0" stroke-width="0.5"/><path d="M1.3 1.3L4.7 4.7M4.7 1.3L1.3 4.7" stroke="#222" stroke-width="0.6"/></svg>
<div style="position:absolute;left:5px;top:143.2px;width:118px;height:401px;background:#efefef;border-top:1px solid #cfcfcf;border-right:1px solid #dedede;"></div>
<div style="position:absolute;left:8.5px;top:337.75px;width:110px;height:11.7px;line-height:11.7px;text-align:center;font-size:5.85px;color:#9a9a9a;white-space:nowrap;">Select macrocell or component</div>
<div style="position:absolute;left:126.5px;top:133.8px;width:719.3px;height:397.5px;background:#2d2d2d;border:1px solid #1e1e1e;border-right:none;"></div>
<div style="position:absolute;left:126.5px;top:531.2px;width:719.3px;height:13px;background:linear-gradient(#eeeeee,#d4d4d4);"></div>
<svg style="position:absolute;left:129px;top:533px;overflow:visible" width="46" height="10" viewBox="0 0 46 10"><rect x="2" y="4.6" width="40" height="1" fill="#c8c8c8"/><path d="M0.5 5.1H1.5M42.5 5.1H43.5" stroke="#bbb"/><rect x="18.5" y="1.8" width="6" height="6.5" rx="1" fill="#fafafa" stroke="#b8b8b8" stroke-width="0.5"/><path d="M5 1.5V2.2M9 1.5V2.2M13 1.5V2.2M29 1.5V2.2M33 1.5V2.2M37 1.5V2.2" stroke="#bbb" stroke-width="0.4"/></svg>
<div style="position:absolute;left:174.4px;top:533px;width:11.099999999999994px;height:9.8px;background:linear-gradient(#fdfdfd,#e8e8e8);border:1px solid #cfcfcf;border-radius:1px;"></div>
<div style="position:absolute;left:187px;top:533px;width:11.5px;height:9.8px;background:linear-gradient(#fdfdfd,#e8e8e8);border:1px solid #cfcfcf;border-radius:1px;"></div>
<div style="position:absolute;left:204px;top:533px;width:12px;height:9.8px;background:linear-gradient(#fdfdfd,#e8e8e8);border:1px solid #cfcfcf;border-radius:1px;"></div>
<div style="position:absolute;left:218px;top:533px;width:11.5px;height:9.8px;background:linear-gradient(#fdfdfd,#e8e8e8);border:1px solid #cfcfcf;border-radius:1px;"></div>
<div style="position:absolute;left:232px;top:533px;width:10.5px;height:9.8px;background:linear-gradient(#fdfdfd,#e8e8e8);border:1px solid #cfcfcf;border-radius:1px;"></div>
<div style="position:absolute;left:201px;top:533px;width:1px;height:10px;background:#c8c8c8;"></div>
<svg style="position:absolute;left:176.5px;top:534px;overflow:visible" width="8" height="8" viewBox="0 0 8 8"><circle cx="3" cy="3" r="2" fill="#f8f8f8" stroke="#666" stroke-width="0.7"/><path d="M4.5 4.5L7 7" stroke="#333" stroke-width="1.1"/><path d="M2 3H4" stroke="#555" stroke-width="0.5"/></svg>
<svg style="position:absolute;left:189.5px;top:534px;overflow:visible" width="8" height="8" viewBox="0 0 8 8"><circle cx="3" cy="3" r="2" fill="#dceaf8" stroke="#333" stroke-width="0.7"/><path d="M4.5 4.5L7 7" stroke="#222" stroke-width="1.1"/><path d="M2 3H4M3 2V4" stroke="#222" stroke-width="0.5"/></svg>
<svg style="position:absolute;left:206px;top:534px;overflow:visible" width="8" height="8" viewBox="0 0 8 8"><path d="M4 0.5L5.5 2H2.5ZM4 7.5L5.5 6H2.5ZM0.5 4L2 2.5V5.5ZM7.5 4L6 2.5V5.5Z" fill="#3a7ac8"/><rect x="2.5" y="2.5" width="3" height="3" fill="#c8dcf0" stroke="#3a7ac8" stroke-width="0.4"/></svg>
<svg style="position:absolute;left:220px;top:534px;overflow:visible" width="8" height="8" viewBox="0 0 8 8"><path d="M4 0.5L7.3 2.5L6.5 6.5L1.5 6.5L0.7 2.5Z" fill="#c8dcf0" stroke="#9ab8d8" stroke-width="0.5"/></svg>
<svg style="position:absolute;left:234.5px;top:534px;overflow:visible" width="6" height="8" viewBox="0 0 6 8"><path d="M3 0.5A2.3 2.3 0 0 1 4.5 4.8V6H1.5V4.8A2.3 2.3 0 0 1 3 0.5Z" fill="#f4f4f4" stroke="#999" stroke-width="0.5"/><rect x="1.8" y="6" width="2.4" height="1.5" fill="#555"/></svg>
<div style="position:absolute;left:845.8px;top:133.8px;width:3.6px;height:410.5px;background:linear-gradient(90deg,#f4f4f4,#e8e8e8 50%,#d8d8d8);"></div>
<div style="position:absolute;left:849px;top:130.5px;width:119px;height:414px;background:#f0f0f0;"></div>
<div style="position:absolute;left:851.5px;top:132.6px;height:11.2px;line-height:11.2px;font-size:5.6px;color:#444;white-space:nowrap;">Component List</div>
<svg style="position:absolute;left:962.5px;top:135px;overflow:visible" width="6" height="6.5" viewBox="0 0 6 6.5"><circle cx="3.2" cy="3.2" r="2.9" fill="#e6e6e6" stroke="#a8a8a8" stroke-width="0.4"/><path d="M3.9 1.8L2.4 3.2L3.9 4.6" stroke="#333" stroke-width="0.7" fill="none"/></svg>
<div style="position:absolute;left:849.4px;top:143.1px;width:118.6px;height:372px;background:#fff;border-left:1px solid #c8c8c8;border-right:1px solid #d8d8d8;border-bottom:1px solid #d0d0d0;"></div>
<div style="position:absolute;left:849.4px;top:143.1px;width:118.6px;height:11.4px;background:linear-gradient(#b0eeb0 0%,#92e292 40%,#72d672 100%);"></div>
<div style="position:absolute;left:854.0px;top:143.2px;width:110px;height:12.0px;line-height:12.0px;text-align:center;font-size:6.0px;color:#163a16;white-space:nowrap;font-weight:bold;">Components</div>
<svg style="position:absolute;left:853.8px;top:156.1px;overflow:visible" width="4" height="3" viewBox="0 0 4 3"><path d="M0 0.3H3.6L1.8 2.6Z" fill="#444"/></svg>
<div style="position:absolute;left:861.6px;top:152.6px;height:10.4px;line-height:10.4px;font-size:5.2px;color:#222;white-space:nowrap;font-weight:bold;">I/O Pins</div>
<div style="position:absolute;left:872.4px;top:161.84px;width:6.2px;height:6.2px;background:#fff;border:1px solid #c4c4c4;"></div>
<svg style="position:absolute;left:873px;top:162.64000000000001px;overflow:visible" width="5" height="5" viewBox="0 0 5 5"><path d="M0.5 2.4L2 4.3L4.6 0.3" stroke="#111" stroke-width="1.15" fill="none"/></svg>
<div style="position:absolute;left:882px;top:159.54px;height:11.0px;line-height:11.0px;font-size:5.5px;color:#333;white-space:nowrap;">VDD (PIN 1)</div>
<div style="position:absolute;left:872.4px;top:169.07999999999998px;width:6.2px;height:6.2px;background:#fff;border:1px solid #c4c4c4;"></div>
<svg style="position:absolute;left:873px;top:169.88px;overflow:visible" width="5" height="5" viewBox="0 0 5 5"><path d="M0.5 2.4L2 4.3L4.6 0.3" stroke="#111" stroke-width="1.15" fill="none"/></svg>
<div style="position:absolute;left:882px;top:166.77999999999997px;height:11.0px;line-height:11.0px;font-size:5.5px;color:#333;white-space:nowrap;">VOUT1 (PIN 2)</div>
<div style="position:absolute;left:872.4px;top:176.32px;width:6.2px;height:6.2px;background:#fff;border:1px solid #c4c4c4;"></div>
<div style="position:absolute;left:882px;top:174.01999999999998px;height:11.0px;line-height:11.0px;font-size:5.5px;color:#aaa;white-space:nowrap;">GND (PIN 3)</div>
<div style="position:absolute;left:872.4px;top:183.56px;width:6.2px;height:6.2px;background:#fff;border:1px solid #c4c4c4;"></div>
<svg style="position:absolute;left:873px;top:184.36px;overflow:visible" width="5" height="5" viewBox="0 0 5 5"><path d="M0.5 2.4L2 4.3L4.6 0.3" stroke="#111" stroke-width="1.15" fill="none"/></svg>
<div style="position:absolute;left:882px;top:181.26px;height:11.0px;line-height:11.0px;font-size:5.5px;color:#333;white-space:nowrap;">VOUT3 (PIN 4)</div>
<div style="position:absolute;left:872.4px;top:190.8px;width:6.2px;height:6.2px;background:#fff;border:1px solid #c4c4c4;"></div>
<svg style="position:absolute;left:873px;top:191.60000000000002px;overflow:visible" width="5" height="5" viewBox="0 0 5 5"><path d="M0.5 2.4L2 4.3L4.6 0.3" stroke="#111" stroke-width="1.15" fill="none"/></svg>
<div style="position:absolute;left:882px;top:188.5px;height:11.0px;line-height:11.0px;font-size:5.5px;color:#333;white-space:nowrap;">VIN3 (PIN 5)</div>
<div style="position:absolute;left:872.4px;top:198.04px;width:6.2px;height:6.2px;background:#fff;border:1px solid #c4c4c4;"></div>
<svg style="position:absolute;left:873px;top:198.84px;overflow:visible" width="5" height="5" viewBox="0 0 5 5"><path d="M0.5 2.4L2 4.3L4.6 0.3" stroke="#111" stroke-width="1.15" fill="none"/></svg>
<div style="position:absolute;left:882px;top:195.73999999999998px;height:11.0px;line-height:11.0px;font-size:5.5px;color:#333;white-space:nowrap;">GPI5 (PIN 6)</div>
<div style="position:absolute;left:872.4px;top:205.28px;width:6.2px;height:6.2px;background:#fff;border:1px solid #c4c4c4;"></div>
<svg style="position:absolute;left:873px;top:206.08px;overflow:visible" width="5" height="5" viewBox="0 0 5 5"><path d="M0.5 2.4L2 4.3L4.6 0.3" stroke="#111" stroke-width="1.15" fill="none"/></svg>
<div style="position:absolute;left:882px;top:202.98px;height:11.0px;line-height:11.0px;font-size:5.5px;color:#333;white-space:nowrap;">GPIO4 (PIN 7)</div>
<div style="position:absolute;left:872.4px;top:212.51999999999998px;width:6.2px;height:6.2px;background:#fff;border:1px solid #c4c4c4;"></div>
<svg style="position:absolute;left:873px;top:213.32px;overflow:visible" width="5" height="5" viewBox="0 0 5 5"><path d="M0.5 2.4L2 4.3L4.6 0.3" stroke="#111" stroke-width="1.15" fill="none"/></svg>
<div style="position:absolute;left:882px;top:210.21999999999997px;height:11.0px;line-height:11.0px;font-size:5.5px;color:#333;white-space:nowrap;">CS (PIN 8)</div>
<div style="position:absolute;left:872.4px;top:219.76px;width:6.2px;height:6.2px;background:#fff;border:1px solid #c4c4c4;"></div>
<svg style="position:absolute;left:873px;top:220.56px;overflow:visible" width="5" height="5" viewBox="0 0 5 5"><path d="M0.5 2.4L2 4.3L4.6 0.3" stroke="#111" stroke-width="1.15" fill="none"/></svg>
<div style="position:absolute;left:882px;top:217.45999999999998px;height:11.0px;line-height:11.0px;font-size:5.5px;color:#333;white-space:nowrap;">VDDIO (PIN 9)</div>
<div style="position:absolute;left:872.4px;top:227.0px;width:6.2px;height:6.2px;background:#fff;border:1px solid #c4c4c4;"></div>
<svg style="position:absolute;left:873px;top:227.8px;overflow:visible" width="5" height="5" viewBox="0 0 5 5"><path d="M0.5 2.4L2 4.3L4.6 0.3" stroke="#111" stroke-width="1.15" fill="none"/></svg>
<div style="position:absolute;left:882px;top:224.7px;height:11.0px;line-height:11.0px;font-size:5.5px;color:#333;white-space:nowrap;">VOUT2 (PIN 10)</div>
<div style="position:absolute;left:872.4px;top:234.24px;width:6.2px;height:6.2px;background:#fff;border:1px solid #c4c4c4;"></div>
<svg style="position:absolute;left:873px;top:235.04000000000002px;overflow:visible" width="5" height="5" viewBox="0 0 5 5"><path d="M0.5 2.4L2 4.3L4.6 0.3" stroke="#111" stroke-width="1.15" fill="none"/></svg>
<div style="position:absolute;left:882px;top:231.94px;height:11.0px;line-height:11.0px;font-size:5.5px;color:#333;white-space:nowrap;">VIN2 (PIN 11)</div>
<div style="position:absolute;left:872.4px;top:241.48px;width:6.2px;height:6.2px;background:#fff;border:1px solid #c4c4c4;"></div>
<svg style="position:absolute;left:873px;top:242.28px;overflow:visible" width="5" height="5" viewBox="0 0 5 5"><path d="M0.5 2.4L2 4.3L4.6 0.3" stroke="#111" stroke-width="1.15" fill="none"/></svg>
<div style="position:absolute;left:882px;top:239.17999999999998px;height:11.0px;line-height:11.0px;font-size:5.5px;color:#333;white-space:nowrap;">GPIO3 (PIN 12)</div>
<div style="position:absolute;left:872.4px;top:248.72px;width:6.2px;height:6.2px;background:#fff;border:1px solid #c4c4c4;"></div>
<svg style="position:absolute;left:873px;top:249.52px;overflow:visible" width="5" height="5" viewBox="0 0 5 5"><path d="M0.5 2.4L2 4.3L4.6 0.3" stroke="#111" stroke-width="1.15" fill="none"/></svg>
<div style="position:absolute;left:882px;top:246.42px;height:11.0px;line-height:11.0px;font-size:5.5px;color:#333;white-space:nowrap;">GPIO2 (PIN 13)</div>
<div style="position:absolute;left:872.4px;top:255.95999999999998px;width:6.2px;height:6.2px;background:#fff;border:1px solid #c4c4c4;"></div>
<svg style="position:absolute;left:873px;top:256.76px;overflow:visible" width="5" height="5" viewBox="0 0 5 5"><path d="M0.5 2.4L2 4.3L4.6 0.3" stroke="#111" stroke-width="1.15" fill="none"/></svg>
<div style="position:absolute;left:882px;top:253.65999999999997px;height:11.0px;line-height:11.0px;font-size:5.5px;color:#333;white-space:nowrap;">GPIO1 (PIN 14)</div>
<svg style="position:absolute;left:853.8px;top:264.7px;overflow:visible" width="4" height="3" viewBox="0 0 4 3"><path d="M0 0.3H3.6L1.8 2.6Z" fill="#444"/></svg>
<div style="position:absolute;left:861.6px;top:261.2px;height:10.4px;line-height:10.4px;font-size:5.2px;color:#222;white-space:nowrap;font-weight:bold;">Combination Function Components</div>
<div style="position:absolute;left:872.4px;top:270.44px;width:6.2px;height:6.2px;background:#fff;border:1px solid #c4c4c4;"></div>
<div style="position:absolute;left:882px;top:268.14px;height:11.0px;line-height:11.0px;font-size:5.5px;color:#666;white-space:nowrap;">3-bit LUT1/DFF/LATCH1</div>
<div style="position:absolute;left:872.4px;top:277.68px;width:6.2px;height:6.2px;background:#fff;border:1px solid #c4c4c4;"></div>
<div style="position:absolute;left:882px;top:275.38px;height:11.0px;line-height:11.0px;font-size:5.5px;color:#666;white-space:nowrap;">3-bit LUT2/DFF/LATCH2</div>
<div style="position:absolute;left:872.4px;top:284.91999999999996px;width:6.2px;height:6.2px;background:#fff;border:1px solid #c4c4c4;"></div>
<div style="position:absolute;left:882px;top:282.61999999999995px;height:11.0px;line-height:11.0px;font-size:5.5px;color:#666;white-space:nowrap;">3-bit LUT3/DFF/LATCH3</div>
<div style="position:absolute;left:872.4px;top:292.15999999999997px;width:6.2px;height:6.2px;background:#fff;border:1px solid #c4c4c4;"></div>
<div style="position:absolute;left:882px;top:289.85999999999996px;height:11.0px;line-height:11.0px;font-size:5.5px;color:#666;white-space:nowrap;">3-bit LUT4/DFF/LATCH4</div>
<div style="position:absolute;left:872.4px;top:299.4px;width:6.2px;height:6.2px;background:#fff;border:1px solid #c4c4c4;"></div>
<div style="position:absolute;left:882px;top:297.09999999999997px;height:11.0px;line-height:11.0px;font-size:5.5px;color:#666;white-space:nowrap;">3-bit LUT5/DFF/LATCH5</div>
<div style="position:absolute;left:872.4px;top:306.64px;width:6.2px;height:6.2px;background:#fff;border:1px solid #c4c4c4;"></div>
<div style="position:absolute;left:882px;top:304.34px;height:11.0px;line-height:11.0px;font-size:5.5px;color:#666;white-space:nowrap;">3-bit LUT6/DFF/LATCH6</div>
<div style="position:absolute;left:872.4px;top:313.88px;width:6.2px;height:6.2px;background:#fff;border:1px solid #c4c4c4;"></div>
<div style="position:absolute;left:882px;top:311.58px;height:11.0px;line-height:11.0px;font-size:5.5px;color:#666;white-space:nowrap;">3-bit LUT7/DFF/LATCH7</div>
<div style="position:absolute;left:872.4px;top:321.12px;width:6.2px;height:6.2px;background:#fff;border:1px solid #c4c4c4;"></div>
<div style="position:absolute;left:882px;top:318.82px;height:11.0px;line-height:11.0px;font-size:5.5px;color:#666;white-space:nowrap;">DLY1</div>
<div style="position:absolute;left:872.4px;top:328.36px;width:6.2px;height:6.2px;background:#fff;border:1px solid #c4c4c4;"></div>
<div style="position:absolute;left:882px;top:326.06px;height:11.0px;line-height:11.0px;font-size:5.5px;color:#666;white-space:nowrap;">DLY2</div>
<div style="position:absolute;left:872.4px;top:335.6px;width:6.2px;height:6.2px;background:#fff;border:1px solid #c4c4c4;"></div>
<div style="position:absolute;left:882px;top:333.3px;height:11.0px;line-height:11.0px;font-size:5.5px;color:#666;white-space:nowrap;">DLY3</div>
<svg style="position:absolute;left:853.8px;top:344.34000000000003px;overflow:visible" width="4" height="3" viewBox="0 0 4 3"><path d="M0 0.3H3.6L1.8 2.6Z" fill="#444"/></svg>
<div style="position:absolute;left:861.6px;top:340.84000000000003px;height:10.4px;line-height:10.4px;font-size:5.2px;color:#222;white-space:nowrap;font-weight:bold;">Multi-functional Components</div>
<div style="position:absolute;left:872.4px;top:350.08000000000004px;width:6.2px;height:6.2px;background:#fff;border:1px solid #c4c4c4;"></div>
<div style="position:absolute;left:882px;top:347.78000000000003px;height:11.0px;line-height:11.0px;font-size:5.5px;color:#666;white-space:nowrap;">MF0 (3-bit LUT0, DFF/LATCH0, 8...</div>
<svg style="position:absolute;left:853.8px;top:358.82px;overflow:visible" width="4" height="3" viewBox="0 0 4 3"><path d="M0 0.3H3.6L1.8 2.6Z" fill="#444"/></svg>
<div style="position:absolute;left:861.6px;top:355.32px;height:10.4px;line-height:10.4px;font-size:5.2px;color:#222;white-space:nowrap;font-weight:bold;">LDOs</div>
<div style="position:absolute;left:872.4px;top:364.56px;width:6.2px;height:6.2px;background:#fff;border:1px solid #c4c4c4;"></div>
<svg style="position:absolute;left:873px;top:365.36px;overflow:visible" width="5" height="5" viewBox="0 0 5 5"><path d="M0.5 2.4L2 4.3L4.6 0.3" stroke="#111" stroke-width="1.15" fill="none"/></svg>
<div style="position:absolute;left:882px;top:362.26px;height:11.0px;line-height:11.0px;font-size:5.5px;color:#666;white-space:nowrap;">LDO1</div>
<div style="position:absolute;left:872.4px;top:371.8px;width:6.2px;height:6.2px;background:#fff;border:1px solid #c4c4c4;"></div>
<svg style="position:absolute;left:873px;top:372.6px;overflow:visible" width="5" height="5" viewBox="0 0 5 5"><path d="M0.5 2.4L2 4.3L4.6 0.3" stroke="#111" stroke-width="1.15" fill="none"/></svg>
<div style="position:absolute;left:882px;top:369.5px;height:11.0px;line-height:11.0px;font-size:5.5px;color:#666;white-space:nowrap;">LDO2</div>
<div style="position:absolute;left:872.4px;top:379.03999999999996px;width:6.2px;height:6.2px;background:#fff;border:1px solid #c4c4c4;"></div>
<svg style="position:absolute;left:873px;top:379.84px;overflow:visible" width="5" height="5" viewBox="0 0 5 5"><path d="M0.5 2.4L2 4.3L4.6 0.3" stroke="#111" stroke-width="1.15" fill="none"/></svg>
<div style="position:absolute;left:882px;top:376.73999999999995px;height:11.0px;line-height:11.0px;font-size:5.5px;color:#666;white-space:nowrap;">LDO3</div>
<svg style="position:absolute;left:853.8px;top:387.78px;overflow:visible" width="4" height="3" viewBox="0 0 4 3"><path d="M0 0.3H3.6L1.8 2.6Z" fill="#444"/></svg>
<div style="position:absolute;left:861.6px;top:384.28px;height:10.4px;line-height:10.4px;font-size:5.2px;color:#222;white-space:nowrap;font-weight:bold;">Special Components</div>
<div style="position:absolute;left:872.4px;top:393.52px;width:6.2px;height:6.2px;background:#fff;border:1px solid #c4c4c4;"></div>
<div style="position:absolute;left:882px;top:391.21999999999997px;height:11.0px;line-height:11.0px;font-size:5.5px;color:#666;white-space:nowrap;">Logic 0</div>
<div style="position:absolute;left:872.4px;top:400.76px;width:6.2px;height:6.2px;background:#fff;border:1px solid #c4c4c4;"></div>
<div style="position:absolute;left:882px;top:398.46px;height:11.0px;line-height:11.0px;font-size:5.5px;color:#666;white-space:nowrap;">Logic 1</div>
<div style="position:absolute;left:872.4px;top:408.0px;width:6.2px;height:6.2px;background:#fff;border:1px solid #c4c4c4;"></div>
<div style="position:absolute;left:882px;top:405.7px;height:11.0px;line-height:11.0px;font-size:5.5px;color:#666;white-space:nowrap;">Crash sequence</div>
<div style="position:absolute;left:872.4px;top:415.24px;width:6.2px;height:6.2px;background:#fff;border:1px solid #c4c4c4;"></div>
<svg style="position:absolute;left:873px;top:416.04px;overflow:visible" width="5" height="5" viewBox="0 0 5 5"><path d="M0.5 2.4L2 4.3L4.6 0.3" stroke="#111" stroke-width="1.15" fill="none"/></svg>
<div style="position:absolute;left:882px;top:412.94px;height:11.0px;line-height:11.0px;font-size:5.5px;color:#666;white-space:nowrap;">I2C</div>
<div style="position:absolute;left:872.4px;top:422.48px;width:6.2px;height:6.2px;background:#fff;border:1px solid #c4c4c4;"></div>
<div style="position:absolute;left:882px;top:420.18px;height:11.0px;line-height:11.0px;font-size:5.5px;color:#666;white-space:nowrap;">Temp sensor</div>
<div style="position:absolute;left:872.4px;top:429.72px;width:6.2px;height:6.2px;background:#fff;border:1px solid #c4c4c4;"></div>
<div style="position:absolute;left:882px;top:427.42px;height:11.0px;line-height:11.0px;font-size:5.5px;color:#666;white-space:nowrap;">Device interrupt request</div>
<div style="position:absolute;left:851.7px;top:518.4px;width:115.3px;height:11px;background:#fff;border:1px solid #d4d4d4;"></div>
<div style="position:absolute;left:854px;top:518.7px;height:10.6px;line-height:10.6px;font-size:5.3px;color:#aaa;white-space:nowrap;">Filter...</div>
<div style="position:absolute;left:849.4px;top:531.5px;width:118.6px;height:13px;background:linear-gradient(#f4f4f4,#c8c8c8);"></div>
<div style="position:absolute;left:851.8px;top:533px;width:28.5px;height:10px;background:linear-gradient(#fdfdfd,#ececec);border:1px solid #c8c8c8;border-radius:1px;"></div>
<div style="position:absolute;left:852.0px;top:532.6px;width:28px;height:10.8px;line-height:10.8px;text-align:center;font-size:5.4px;color:#333;white-space:nowrap;">Show all</div>
<div style="position:absolute;left:882.5px;top:533px;width:26px;height:10px;background:linear-gradient(#fdfdfd,#ececec);border:1px solid #c8c8c8;border-radius:1px;"></div>
<div style="position:absolute;left:882.5px;top:532.6px;width:26px;height:10.8px;line-height:10.8px;text-align:center;font-size:5.4px;color:#333;white-space:nowrap;">Hide all</div>
<svg style="position:absolute;left:0;top:0" width="971" height="548" viewBox="0 0 971 548"><defs><linearGradient id="gb" x1="0" y1="0" x2="0" y2="1"><stop offset="0" stop-color="#6ac4f8"/><stop offset="0.5" stop-color="#3aa6ee"/><stop offset="1" stop-color="#1c8ae0"/></linearGradient><linearGradient id="gy" x1="0" y1="0" x2="0" y2="1"><stop offset="0" stop-color="#fad468"/><stop offset="0.5" stop-color="#f4c040"/><stop offset="1" stop-color="#e8a420"/></linearGradient><linearGradient id="go" x1="0" y1="0" x2="0" y2="1"><stop offset="0" stop-color="#f8b040"/><stop offset="1" stop-color="#dc8414"/></linearGradient><linearGradient id="gg" x1="0" y1="0" x2="0" y2="1"><stop offset="0" stop-color="#fbfbfb"/><stop offset="0.45" stop-color="#dedede"/><stop offset="1" stop-color="#a4a4a4"/></linearGradient></defs><line x1="448" y1="237.3" x2="458" y2="237.3" stroke="#8a8a8a" stroke-width="0.9"/><line x1="484" y1="237.3" x2="494.2" y2="237.3" stroke="#8a8a8a" stroke-width="0.9"/><circle cx="448" cy="237.3" r="1.7" fill="#2d2d2d" stroke="#e0e0e0" stroke-width="0.75"/><circle cx="494.2" cy="237.3" r="1.7" fill="#2d2d2d" stroke="#e0e0e0" stroke-width="0.75"/><path d="M458,230.3H483.0L484.4,236.9L483.0,243.5H458L459.4,236.9Z" fill="url(#gb)"/><text x="471.2" y="239.68" font-size="5.5" fill="#10467e" text-anchor="middle" font-weight="normal" font-family="Liberation Sans" stroke="#10467e" stroke-width="0.15">CS</text><line x1="448" y1="260.5" x2="458" y2="260.5" stroke="#8a8a8a" stroke-width="0.9"/><circle cx="448" cy="260.5" r="1.7" fill="#2d2d2d" stroke="#e0e0e0" stroke-width="0.75"/><rect x="458" y="253.8" width="26.399999999999977" height="13.199999999999989" rx="1.2" fill="url(#gy)"/><text x="471.2" y="263.18" font-size="5.5" fill="#5a3c08" text-anchor="middle" font-weight="normal" font-family="Liberation Sans" stroke="#5a3c08" stroke-width="0.15">VDDIO</text><line x1="448" y1="278.4" x2="458" y2="278.4" stroke="#8a8a8a" stroke-width="0.9"/><circle cx="448" cy="278.4" r="1.7" fill="#2d2d2d" stroke="#e0e0e0" stroke-width="0.75"/><line x1="484" y1="278.8" x2="490" y2="278.8" stroke="#8a8a8a" stroke-width="0.9"/><rect x="458" y="271.7" width="26.399999999999977" height="13.300000000000011" rx="1.2" fill="url(#gb)"/><text x="471.2" y="281.13" font-size="5.5" fill="#10467e" text-anchor="middle" font-weight="normal" font-family="Liberation Sans" stroke="#10467e" stroke-width="0.15">VDD</text><path d="M488,275H509.6L511,278.8L509.6,282.6H488L489.4,278.8Z" fill="url(#go)"/><text x="499.5" y="281.27" font-size="5.2" fill="#5a3000" text-anchor="middle" font-weight="normal" font-family="Liberation Sans" stroke="#5a3000" stroke-width="0.12">VDD</text><rect x="291.0" y="311.4" width="15" height="10" fill="#262626"/><text x="298.5" y="319.08" font-size="6.6" fill="#e6e85c" text-anchor="middle" font-weight="normal" font-family="Liberation Sans" stroke="#e6e85c" stroke-width="0.12">SCL</text><line x1="275" y1="332.6" x2="286" y2="332.6" stroke="#8a8a8a" stroke-width="0.9"/><circle cx="275" cy="332.6" r="1.7" fill="#2d2d2d" stroke="#e0e0e0" stroke-width="0.75"/><line x1="312" y1="332.6" x2="322" y2="332.6" stroke="#8a8a8a" stroke-width="0.9"/><path d="M287.0,325.9H310.8L312.2,332.6L310.8,339.3H287.0L285.6,332.6Z" fill="url(#gb)"/><text x="298.9" y="335.38" font-size="5.5" fill="#10467e" text-anchor="middle" font-weight="normal" font-family="Liberation Sans" stroke="#10467e" stroke-width="0.15">GPI5</text><rect x="291.0" y="349.7" width="15" height="10" fill="#262626"/><text x="298.5" y="357.38" font-size="6.6" fill="#e6e85c" text-anchor="middle" font-weight="normal" font-family="Liberation Sans" stroke="#e6e85c" stroke-width="0.12">SDA</text><line x1="275" y1="371.2" x2="286" y2="371.2" stroke="#8a8a8a" stroke-width="0.9"/><circle cx="275" cy="371.2" r="1.7" fill="#2d2d2d" stroke="#e0e0e0" stroke-width="0.75"/><line x1="311" y1="368" x2="322" y2="368" stroke="#8a8a8a" stroke-width="0.9"/><line x1="311" y1="374.4" x2="322" y2="374.4" stroke="#8a8a8a" stroke-width="0.9"/><circle cx="322" cy="368" r="1.7" fill="#2d2d2d" stroke="#e0e0e0" stroke-width="0.75"/><path d="M287.0,364.6H310.8L312.2,371.15L310.8,377.7H287.0L285.6,371.15Z" fill="url(#gb)"/><text x="298.9" y="373.93" font-size="5.5" fill="#10467e" text-anchor="middle" font-weight="normal" font-family="Liberation Sans" stroke="#10467e" stroke-width="0.15">GPIO4</text><rect x="284.25" y="382" width="28.5" height="10" fill="#262626"/><text x="298.5" y="389.68" font-size="6.6" fill="#e6e85c" text-anchor="middle" font-weight="normal" font-family="Liberation Sans" stroke="#e6e85c" stroke-width="0.12">Not Used</text><line x1="275" y1="403.2" x2="286" y2="403.2" stroke="#8a8a8a" stroke-width="0.9"/><circle cx="275" cy="403.2" r="1.7" fill="#2d2d2d" stroke="#e0e0e0" stroke-width="0.75"/><line x1="311" y1="400.7" x2="322" y2="400.7" stroke="#8a8a8a" stroke-width="0.9"/><line x1="311" y1="406.6" x2="322" y2="406.6" stroke="#8a8a8a" stroke-width="0.9"/><circle cx="322" cy="400.7" r="1.7" fill="#2d2d2d" stroke="#e0e0e0" stroke-width="0.75"/><circle cx="322" cy="406.6" r="1.7" fill="#2d2d2d" stroke="#e0e0e0" stroke-width="0.75"/><path d="M287.0,397H310.8L312.2,403.3L310.8,409.6H287.0L285.6,403.3Z" fill="url(#gy)"/><text x="298.9" y="406.08" font-size="5.5" fill="#5a3c08" text-anchor="middle" font-weight="normal" font-family="Liberation Sans" stroke="#5a3c08" stroke-width="0.15">GPIO3</text><polyline points="322,332.6 356.3,332.6 356.3,344 368.8,344" stroke="#d4842c" stroke-width="1.3" fill="none"/><polyline points="322,374.4 356.3,374.4 356.3,361.8 368.8,361.8" stroke="#d4842c" stroke-width="1.3" fill="none"/><line x1="368.8" y1="344" x2="379.2" y2="344" stroke="#8a8a8a" stroke-width="0.9"/><line x1="368.8" y1="361.8" x2="379.2" y2="361.8" stroke="#8a8a8a" stroke-width="0.9"/><circle cx="322" cy="332.6" r="1.9" fill="#ffffff"/><circle cx="322" cy="374.4" r="1.9" fill="#ffffff"/><circle cx="356.3" cy="332.6" r="1.45" fill="#e8902a"/><circle cx="356.3" cy="344" r="1.45" fill="#e8902a"/><circle cx="356.3" cy="361.8" r="1.45" fill="#e8902a"/><circle cx="356.3" cy="374.4" r="1.45" fill="#e8902a"/><circle cx="368.8" cy="344" r="2.0" fill="#ea922c"/><circle cx="368.8" cy="361.8" r="2.0" fill="#ea922c"/><rect x="385.0" y="311.4" width="18" height="10" fill="#262626"/><text x="394" y="319.08" font-size="6.6" fill="#e6e85c" text-anchor="middle" font-weight="normal" font-family="Liberation Sans" stroke="#e6e85c" stroke-width="0.12">0x75</text><line x1="408.8" y1="331.6" x2="418.8" y2="331.6" stroke="#8a8a8a" stroke-width="0.9"/><circle cx="418.8" cy="331.6" r="1.7" fill="#2d2d2d" stroke="#e0e0e0" stroke-width="0.75"/><line x1="408.8" y1="337.67" x2="418.8" y2="337.67" stroke="#8a8a8a" stroke-width="0.9"/><circle cx="418.8" cy="337.67" r="1.7" fill="#2d2d2d" stroke="#e0e0e0" stroke-width="0.75"/><line x1="408.8" y1="343.74" x2="418.8" y2="343.74" stroke="#8a8a8a" stroke-width="0.9"/><circle cx="418.8" cy="343.74" r="1.7" fill="#2d2d2d" stroke="#e0e0e0" stroke-width="0.75"/><line x1="408.8" y1="349.81" x2="418.8" y2="349.81" stroke="#8a8a8a" stroke-width="0.9"/><circle cx="418.8" cy="349.81" r="1.7" fill="#2d2d2d" stroke="#e0e0e0" stroke-width="0.75"/><line x1="408.8" y1="355.88" x2="418.8" y2="355.88" stroke="#8a8a8a" stroke-width="0.9"/><circle cx="418.8" cy="355.88" r="1.7" fill="#2d2d2d" stroke="#e0e0e0" stroke-width="0.75"/><line x1="408.8" y1="361.95000000000005" x2="418.8" y2="361.95000000000005" stroke="#8a8a8a" stroke-width="0.9"/><circle cx="418.8" cy="361.95000000000005" r="1.7" fill="#2d2d2d" stroke="#e0e0e0" stroke-width="0.75"/><line x1="408.8" y1="368.02000000000004" x2="418.8" y2="368.02000000000004" stroke="#8a8a8a" stroke-width="0.9"/><circle cx="418.8" cy="368.02000000000004" r="1.7" fill="#2d2d2d" stroke="#e0e0e0" stroke-width="0.75"/><line x1="408.8" y1="374.09000000000003" x2="418.8" y2="374.09000000000003" stroke="#8a8a8a" stroke-width="0.9"/><circle cx="418.8" cy="374.09000000000003" r="1.7" fill="#2d2d2d" stroke="#e0e0e0" stroke-width="0.75"/><line x1="385.8" y1="379.8" x2="385.8" y2="390.5" stroke="#8a8a8a" stroke-width="0.9"/><circle cx="385.8" cy="390.5" r="1.7" fill="#2d2d2d" stroke="#e0e0e0" stroke-width="0.75"/><line x1="394" y1="379.8" x2="394" y2="390.5" stroke="#8a8a8a" stroke-width="0.9"/><circle cx="394" cy="390.5" r="1.7" fill="#2d2d2d" stroke="#e0e0e0" stroke-width="0.75"/><line x1="402.1" y1="379.8" x2="402.1" y2="390.5" stroke="#8a8a8a" stroke-width="0.9"/><circle cx="402.1" cy="390.5" r="1.7" fill="#2d2d2d" stroke="#e0e0e0" stroke-width="0.75"/><rect x="379" y="325.9" width="29.8" height="53.9" rx="1.2" fill="url(#gg)"/><text x="393.9" y="355.09" font-size="5.8" fill="#505050" text-anchor="middle" font-weight="normal" font-family="Liberation Sans">I2C</text><rect x="460.5" y="308.6" width="22" height="10" fill="#262626"/><text x="471.5" y="316.28" font-size="6.6" fill="#e6e85c" text-anchor="middle" font-weight="normal" font-family="Liberation Sans" stroke="#e6e85c" stroke-width="0.12">Enable</text><line x1="448" y1="329.8" x2="458" y2="329.8" stroke="#8a8a8a" stroke-width="0.9"/><circle cx="448" cy="329.8" r="1.7" fill="#2d2d2d" stroke="#e0e0e0" stroke-width="0.75"/><line x1="484" y1="326.6" x2="494.6" y2="326.6" stroke="#8a8a8a" stroke-width="0.9"/><line x1="484" y1="332.8" x2="494.6" y2="332.8" stroke="#8a8a8a" stroke-width="0.9"/><circle cx="494.6" cy="326.6" r="1.7" fill="#2d2d2d" stroke="#e0e0e0" stroke-width="0.75"/><path d="M459.4,323.4H483.0L484.4,329.85L483.0,336.3H459.4L458,329.85Z" fill="url(#gy)"/><text x="471.2" y="332.63" font-size="5.5" fill="#5a3c08" text-anchor="middle" font-weight="normal" font-family="Liberation Sans" stroke="#5a3c08" stroke-width="0.15">GPIO2</text><polyline points="494.6,332.8 537.2,332.8" stroke="#1f9a2a" stroke-width="1.2" fill="none"/><circle cx="494.6" cy="332.8" r="1.9" fill="#ffffff"/><circle cx="537.2" cy="332.8" r="1.9" fill="#ffffff"/><line x1="537.2" y1="332.8" x2="547" y2="332.8" stroke="#8a8a8a" stroke-width="0.9"/><line x1="543" y1="325.2" x2="547" y2="325.2" stroke="#8a8a8a" stroke-width="0.9"/><path d="M520.5,321.5H542.1L543.5,325.25L542.1,329H520.5L521.9,325.25Z" fill="url(#go)"/><text x="532.0" y="327.72" font-size="5.2" fill="#5a3000" text-anchor="middle" font-weight="normal" font-family="Liberation Sans" stroke="#5a3000" stroke-width="0.12">VDD</text><rect x="548.25" y="304.4" width="27.5" height="10" fill="#262626"/><text x="562" y="312.08" font-size="6.6" fill="#e6e85c" text-anchor="middle" font-weight="normal" font-family="Liberation Sans" stroke="#e6e85c" stroke-width="0.12">LDO_HP</text><line x1="577" y1="323.2" x2="587" y2="323.2" stroke="#8a8a8a" stroke-width="0.9"/><line x1="577" y1="329" x2="587" y2="329" stroke="#8a8a8a" stroke-width="0.9"/><line x1="577" y1="334.9" x2="587" y2="334.9" stroke="#8a8a8a" stroke-width="0.9"/><circle cx="587" cy="329" r="1.7" fill="#2d2d2d" stroke="#e0e0e0" stroke-width="0.75"/><circle cx="587" cy="334.9" r="1.7" fill="#2d2d2d" stroke="#e0e0e0" stroke-width="0.75"/><rect x="547" y="319" width="30" height="19" rx="1.2" fill="url(#gg)"/><text x="562.0" y="331.48" font-size="5.5" fill="#505050" text-anchor="middle" font-weight="normal" font-family="Liberation Sans" stroke="#505050" stroke-width="0.15">LDO1</text><polyline points="587,323.2 621.7,323.2" stroke="#d4842c" stroke-width="1.3" fill="none"/><circle cx="587" cy="323.2" r="2.0" fill="#ea922c"/><circle cx="621.7" cy="323.2" r="2.0" fill="#ea922c"/><line x1="621.7" y1="322.8" x2="632" y2="322.8" stroke="#8a8a8a" stroke-width="0.9"/><rect x="634.55" y="302.5" width="20.5" height="10" fill="#262626"/><text x="644.8" y="310.18" font-size="6.6" fill="#e6e85c" text-anchor="middle" font-weight="normal" font-family="Liberation Sans" stroke="#e6e85c" stroke-width="0.12">2.85 V</text><path d="M631.7,316H656.8000000000001L658.2,322.75L656.8000000000001,329.5H631.7L633.1,322.75Z" fill="url(#gb)"/><text x="644.95" y="325.53" font-size="5.5" fill="#10467e" text-anchor="middle" font-weight="normal" font-family="Liberation Sans" stroke="#10467e" stroke-width="0.15">VOUT1</text><line x1="658" y1="322.8" x2="668" y2="322.8" stroke="#8a8a8a" stroke-width="0.9"/><circle cx="668" cy="322.8" r="1.7" fill="#2d2d2d" stroke="#e0e0e0" stroke-width="0.75"/><rect x="623.05" y="335" width="43.5" height="10" fill="#262626"/><text x="644.8" y="342.68" font-size="6.6" fill="#e6e85c" text-anchor="middle" font-weight="normal" font-family="Liberation Sans" stroke="#e6e85c" stroke-width="0.12">Remote Sense</text><line x1="621.7" y1="355.9" x2="632" y2="355.9" stroke="#8a8a8a" stroke-width="0.9"/><circle cx="621.7" cy="355.9" r="1.7" fill="#2d2d2d" stroke="#e0e0e0" stroke-width="0.75"/><line x1="657" y1="352.5" x2="668" y2="352.5" stroke="#8a8a8a" stroke-width="0.9"/><circle cx="668" cy="352.5" r="1.7" fill="#2d2d2d" stroke="#e0e0e0" stroke-width="0.75"/><line x1="657" y1="358.8" x2="663" y2="358.8" stroke="#8a8a8a" stroke-width="0.9"/><path d="M632.9,349.2H656.6L658,355.6L656.6,362H632.9L631.5,355.6Z" fill="url(#gy)"/><text x="644.75" y="358.38" font-size="5.5" fill="#5a3c08" text-anchor="middle" font-weight="normal" font-family="Liberation Sans" stroke="#5a3c08" stroke-width="0.15">GPIO1</text><path d="M662,355.3H696.6L698,358.85L696.6,362.4H662L663.4,358.85Z" fill="url(#go)"/><text x="680.0" y="361.32" font-size="5.2" fill="#5a3000" text-anchor="middle" font-weight="normal" font-family="Liberation Sans" stroke="#5a3000" stroke-width="0.12">LDO1 sense</text><line x1="448" y1="384.4" x2="458" y2="384.4" stroke="#8a8a8a" stroke-width="0.9"/><circle cx="448" cy="384.4" r="1.7" fill="#2d2d2d" stroke="#e0e0e0" stroke-width="0.75"/><path d="M458,377.8H483.0L484.4,384.3L483.0,390.8H458L459.4,384.3Z" fill="url(#gb)"/><text x="471.2" y="387.08" font-size="5.5" fill="#10467e" text-anchor="middle" font-weight="normal" font-family="Liberation Sans" stroke="#10467e" stroke-width="0.15">VIN2</text><line x1="484" y1="384.4" x2="494.6" y2="384.4" stroke="#8a8a8a" stroke-width="0.9"/><polyline points="494.6,384.4 537.2,384.4" stroke="#d4842c" stroke-width="1.3" fill="none"/><circle cx="494.6" cy="384.4" r="2.0" fill="#ea922c"/><circle cx="537.2" cy="384.4" r="2.0" fill="#ea922c"/><line x1="537.2" y1="384.4" x2="547" y2="384.4" stroke="#8a8a8a" stroke-width="0.9"/><line x1="537.2" y1="392.2" x2="547" y2="392.2" stroke="#8a8a8a" stroke-width="0.9"/><circle cx="537.2" cy="392.2" r="1.7" fill="#2d2d2d" stroke="#e0e0e0" stroke-width="0.75"/><rect x="547.75" y="363.8" width="28.5" height="10" fill="#262626"/><text x="562" y="371.48" font-size="6.6" fill="#e6e85c" text-anchor="middle" font-weight="normal" font-family="Liberation Sans" stroke="#e6e85c" stroke-width="0.12">Not Used</text><line x1="577" y1="382.2" x2="587" y2="382.2" stroke="#8a8a8a" stroke-width="0.9"/><line x1="577" y1="388.2" x2="587" y2="388.2" stroke="#8a8a8a" stroke-width="0.9"/><line x1="577" y1="394" x2="587" y2="394" stroke="#8a8a8a" stroke-width="0.9"/><circle cx="587" cy="388.2" r="1.7" fill="#2d2d2d" stroke="#e0e0e0" stroke-width="0.75"/><circle cx="587" cy="394" r="1.7" fill="#2d2d2d" stroke="#e0e0e0" stroke-width="0.75"/><rect x="547" y="378.4" width="30" height="18.600000000000023" rx="1.2" fill="url(#gg)"/><text x="562.0" y="390.68" font-size="5.5" fill="#505050" text-anchor="middle" font-weight="normal" font-family="Liberation Sans" stroke="#505050" stroke-width="0.15">LDO2</text><polyline points="587,382.2 621.7,382.2" stroke="#d4842c" stroke-width="1.3" fill="none"/><circle cx="587" cy="382.2" r="2.0" fill="#ea922c"/><circle cx="621.7" cy="382.2" r="2.0" fill="#ea922c"/><line x1="621.7" y1="382.2" x2="632" y2="382.2" stroke="#8a8a8a" stroke-width="0.9"/><path d="M631.7,375.4H656.8000000000001L658.2,382.15L656.8000000000001,388.9H631.7L633.1,382.15Z" fill="url(#gb)"/><text x="644.95" y="384.93" font-size="5.5" fill="#10467e" text-anchor="middle" font-weight="normal" font-family="Liberation Sans" stroke="#10467e" stroke-width="0.15">VOUT2</text><line x1="658" y1="382.2" x2="668" y2="382.2" stroke="#8a8a8a" stroke-width="0.9"/><circle cx="668" cy="382.2" r="1.7" fill="#2d2d2d" stroke="#e0e0e0" stroke-width="0.75"/><line x1="448" y1="425" x2="458" y2="425" stroke="#8a8a8a" stroke-width="0.9"/><circle cx="448" cy="425" r="1.7" fill="#2d2d2d" stroke="#e0e0e0" stroke-width="0.75"/><path d="M458,418.3H483.0L484.4,424.75L483.0,431.2H458L459.4,424.75Z" fill="url(#gb)"/><text x="471.2" y="427.53" font-size="5.5" fill="#10467e" text-anchor="middle" font-weight="normal" font-family="Liberation Sans" stroke="#10467e" stroke-width="0.15">VIN3</text><line x1="484" y1="425" x2="494.6" y2="425" stroke="#8a8a8a" stroke-width="0.9"/><polyline points="494.6,425 537.2,425" stroke="#d4842c" stroke-width="1.3" fill="none"/><circle cx="494.6" cy="425" r="2.0" fill="#ea922c"/><circle cx="537.2" cy="425" r="2.0" fill="#ea922c"/><line x1="537.2" y1="425" x2="547" y2="425" stroke="#8a8a8a" stroke-width="0.9"/><line x1="537.2" y1="433.8" x2="547" y2="433.8" stroke="#8a8a8a" stroke-width="0.9"/><circle cx="537.2" cy="433.8" r="1.7" fill="#2d2d2d" stroke="#e0e0e0" stroke-width="0.75"/><rect x="547.75" y="405.5" width="28.5" height="10" fill="#262626"/><text x="562" y="413.18" font-size="6.6" fill="#e6e85c" text-anchor="middle" font-weight="normal" font-family="Liberation Sans" stroke="#e6e85c" stroke-width="0.12">Not Used</text><line x1="577" y1="423.1" x2="587" y2="423.1" stroke="#8a8a8a" stroke-width="0.9"/><line x1="577" y1="429" x2="587" y2="429" stroke="#8a8a8a" stroke-width="0.9"/><line x1="577" y1="435" x2="587" y2="435" stroke="#8a8a8a" stroke-width="0.9"/><circle cx="587" cy="429" r="1.7" fill="#2d2d2d" stroke="#e0e0e0" stroke-width="0.75"/><circle cx="587" cy="435" r="1.7" fill="#2d2d2d" stroke="#e0e0e0" stroke-width="0.75"/><rect x="547" y="420.4" width="30" height="18.0" rx="1.2" fill="url(#gg)"/><text x="562.0" y="432.38" font-size="5.5" fill="#505050" text-anchor="middle" font-weight="normal" font-family="Liberation Sans" stroke="#505050" stroke-width="0.15">LDO3</text><polyline points="587,423.1 622,423.1" stroke="#d4842c" stroke-width="1.3" fill="none"/><circle cx="587" cy="423.1" r="2.0" fill="#ea922c"/><circle cx="622" cy="423.1" r="2.0" fill="#ea922c"/><line x1="622" y1="423.1" x2="632" y2="423.1" stroke="#8a8a8a" stroke-width="0.9"/><path d="M632,417.8H656.2L657.6,423.8L656.2,429.8H632L633.4,423.8Z" fill="url(#gb)"/><text x="644.8" y="426.58" font-size="5.5" fill="#10467e" text-anchor="middle" font-weight="normal" font-family="Liberation Sans" stroke="#10467e" stroke-width="0.15">VOUT3</text><line x1="657.5" y1="423.1" x2="667.6" y2="423.1" stroke="#8a8a8a" stroke-width="0.9"/><circle cx="667.6" cy="423.1" r="1.7" fill="#2d2d2d" stroke="#e0e0e0" stroke-width="0.75"/></svg>
<div style="position:absolute;left:968px;top:4px;width:1px;height:541px;background:#b4b4b4;"></div>
</body></html>
